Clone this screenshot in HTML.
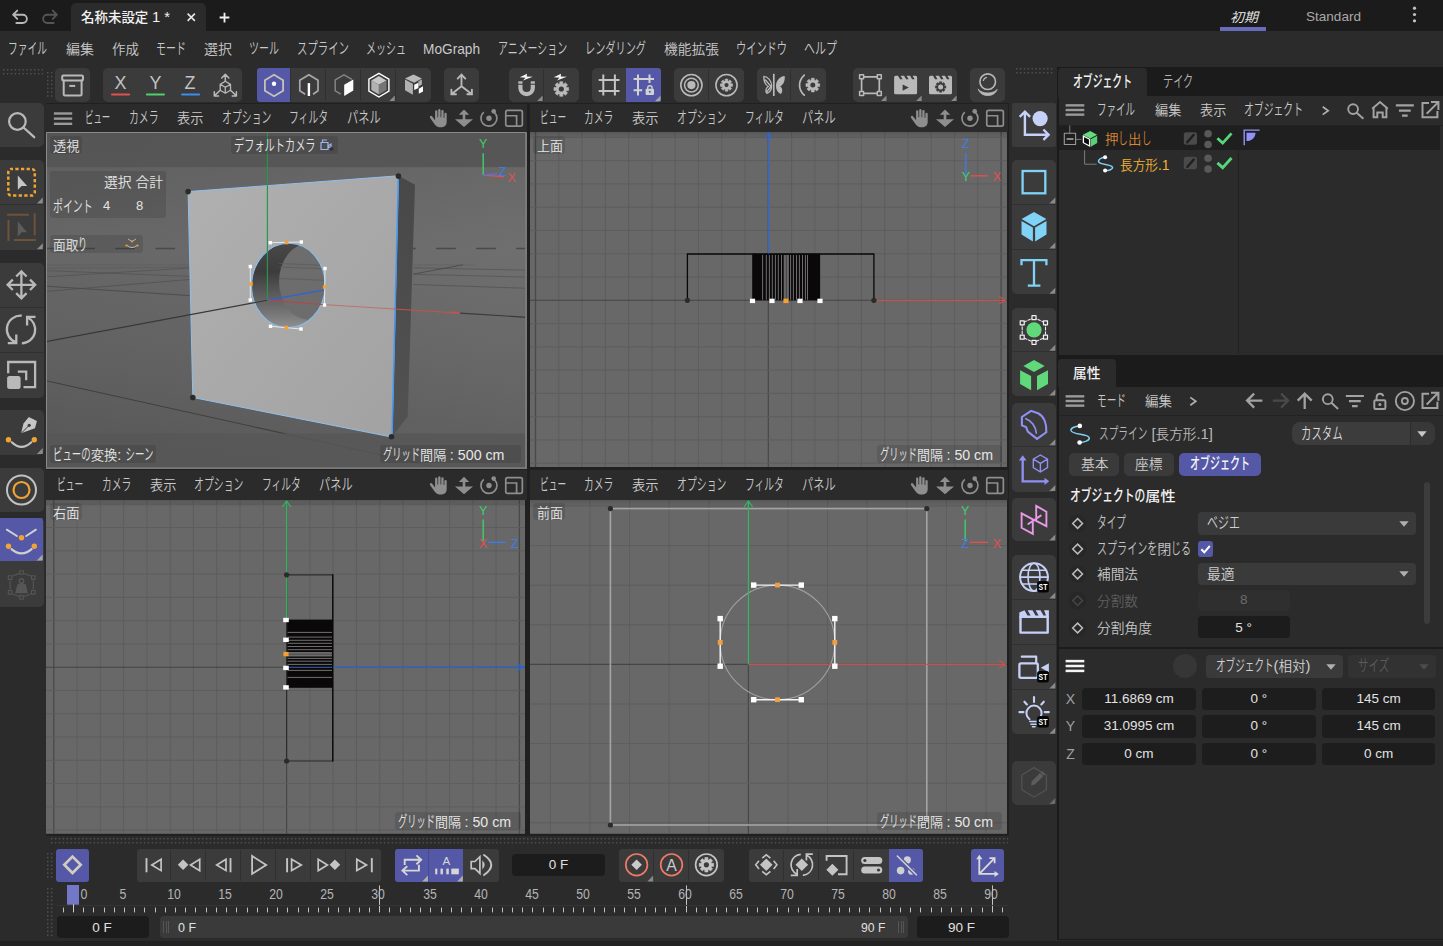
<!DOCTYPE html>
<html lang="ja"><head><meta charset="utf-8"><title>Cinema 4D</title><style>
html,body{margin:0;padding:0;background:#2b2b2b;}
body{width:1443px;height:946px;position:relative;overflow:hidden;font-family:"Liberation Sans","Noto Sans CJK JP",sans-serif;}
.a{position:absolute;display:block;}
.t{position:absolute;display:inline-block;white-space:nowrap;font-weight:350;}
.k{display:inline-block;transform-origin:0 65%;}
</style></head><body>
<div class="a" style="left:0px;top:0px;width:1443px;height:31px;background:#1b1b1b;"></div>
<div class="a" style="left:71px;top:3px;width:135px;height:28px;background:#2b2b2b;border-radius:5px 5px 0 0;"></div>
<svg class="a" style="left:8.80px;top:5.60px;color:#b8b8b8;" width="22" height="22" viewBox="0 0 24 24" fill="none" stroke="currentColor" stroke-width="1.6" stroke-linecap="round" stroke-linejoin="round"><path d="M9 5L4.5 9.5L9 14M4.5 9.5H15a4.5 4.5 0 0 1 0 9H8" stroke-width="2"/></svg>
<svg class="a" style="left:38.50px;top:5.60px;color:#555;" width="22" height="22" viewBox="0 0 24 24" fill="none" stroke="currentColor" stroke-width="1.6" stroke-linecap="round" stroke-linejoin="round"><path d="M15 5l4.5 4.5L15 14M19.5 9.5H9a4.5 4.5 0 0 0 0 9h7" stroke-width="2"/></svg>
<span class="t" id="t0" style="left:81px;top:7.20px;font-size:13.2px;line-height:20px;color:#f2f2f2;transform:scaleX(1.0206);transform-origin:0 50%;font-weight:500;">名称未設定 <span style="font-size:1.09em">1 *</span></span>
<svg class="a" style="left:184.45px;top:9.95px;color:#e8e8e8;" width="14.5" height="14.5" viewBox="0 0 24 24" fill="none" stroke="currentColor" stroke-width="1.6" stroke-linecap="round" stroke-linejoin="round"><path d="M6 6L18 18M18 6L6 18" stroke-width="2.6" stroke-linecap="butt"/></svg>
<svg class="a" style="left:218.00px;top:10.50px;color:#f0f0f0;" width="13" height="13" viewBox="0 0 24 24" fill="none" stroke="currentColor" stroke-width="1.6" stroke-linecap="round" stroke-linejoin="round"><path d="M12 3V21M3 12H21" stroke-width="3.4" stroke-linecap="butt"/></svg>
<span class="t" id="t1" style="left:1230px;top:7.90px;font-size:13.2px;line-height:20px;color:#f0f0f0;transform:scaleX(1.0616);transform-origin:0 50%;font-style:italic;">初期</span>
<div class="a" style="left:1219.9px;top:26.9px;width:46.2px;height:4.1px;background:#676cba;"></div>
<span class="t" id="t2" style="left:1306px;top:7.00px;font-size:13.5px;line-height:20px;color:#a8a8a8;transform:scaleX(1.0037);transform-origin:0 50%;">Standard</span>
<svg class="a" style="left:1404.50px;top:5.00px;color:#c4c4c4;" width="19" height="19" viewBox="0 0 24 24" fill="none" stroke="currentColor" stroke-width="1.6" stroke-linecap="round" stroke-linejoin="round"><g fill="currentColor" stroke="none"><circle cx="12" cy="4" r="2"/><circle cx="12" cy="12" r="2"/><circle cx="12" cy="20" r="2"/></g></svg>
<span class="t" id="t3" style="left:8px;top:39.90px;font-size:13.2px;line-height:20px;color:#c9c9c9;transform:scaleX(1.0413);transform-origin:0 50%;"><span class="k" style="margin-right:-15.31px;transform:scale(0.71,1.2)">ファイル</span></span>
<span class="t" id="t4" style="left:66px;top:39.90px;font-size:13.2px;line-height:20px;color:#c9c9c9;transform:scaleX(1.0616);transform-origin:0 50%;">編集</span>
<span class="t" id="t5" style="left:112px;top:39.90px;font-size:13.2px;line-height:20px;color:#c9c9c9;transform:scaleX(1.0237);transform-origin:0 50%;">作成</span>
<span class="t" id="t6" style="left:156px;top:39.90px;font-size:13.2px;line-height:20px;color:#c9c9c9;transform:scaleX(1.0679);transform-origin:0 50%;"><span class="k" style="margin-right:-11.48px;transform:scale(0.71,1.2)">モード</span></span>
<span class="t" id="t7" style="left:204px;top:39.90px;font-size:13.2px;line-height:20px;color:#c9c9c9;transform:scaleX(1.0616);transform-origin:0 50%;">選択</span>
<span class="t" id="t8" style="left:249px;top:39.90px;font-size:13.2px;line-height:20px;color:#c9c9c9;transform:scaleX(1.0679);transform-origin:0 50%;"><span class="k" style="margin-right:-11.48px;transform:scale(0.71,1.2)">ツール</span></span>
<span class="t" id="t9" style="left:297px;top:39.90px;font-size:13.2px;line-height:20px;color:#c9c9c9;transform:scaleX(1.1108);transform-origin:0 50%;"><span class="k" style="margin-right:-19.14px;transform:scale(0.71,1.2)">スプライン</span></span>
<span class="t" id="t10" style="left:366px;top:39.90px;font-size:13.2px;line-height:20px;color:#c9c9c9;transform:scaleX(1.0680);transform-origin:0 50%;"><span class="k" style="margin-right:-15.31px;transform:scale(0.71,1.2)">メッシュ</span></span>
<span class="t" id="t11" style="left:423px;top:39.00px;font-size:14.5px;line-height:20px;color:#c9c9c9;transform:scaleX(0.9429);transform-origin:0 50%;">MoGraph</span>
<span class="t" id="t12" style="left:498px;top:39.90px;font-size:13.2px;line-height:20px;color:#c9c9c9;transform:scaleX(1.0615);transform-origin:0 50%;"><span class="k" style="margin-right:-26.80px;transform:scale(0.71,1.2)">アニメーション</span></span>
<span class="t" id="t13" style="left:585px;top:39.90px;font-size:13.2px;line-height:20px;color:#c9c9c9;transform:scaleX(1.0863);transform-origin:0 50%;"><span class="k" style="margin-right:-22.97px;transform:scale(0.71,1.2)">レンダリング</span></span>
<span class="t" id="t14" style="left:664px;top:39.90px;font-size:13.2px;line-height:20px;color:#c9c9c9;transform:scaleX(1.0427);transform-origin:0 50%;">機能拡張</span>
<span class="t" id="t15" style="left:736px;top:39.90px;font-size:13.2px;line-height:20px;color:#c9c9c9;transform:scaleX(1.0895);transform-origin:0 50%;"><span class="k" style="margin-right:-19.14px;transform:scale(0.71,1.2)">ウインドウ</span></span>
<span class="t" id="t16" style="left:804px;top:39.90px;font-size:13.2px;line-height:20px;color:#c9c9c9;transform:scaleX(1.1746);transform-origin:0 50%;"><span class="k" style="margin-right:-11.48px;transform:scale(0.71,1.2)">ヘルプ</span></span>
<svg class="a" style="left:3px;top:69px" width="40" height="8.9" fill="#505050"><rect x="0.00" y="0.00" width="1.500" height="1.500"/><rect x="0.00" y="3.95" width="1.500" height="1.500"/><rect x="3.87" y="0.00" width="1.500" height="1.500"/><rect x="3.87" y="3.95" width="1.500" height="1.500"/><rect x="7.74" y="0.00" width="1.500" height="1.500"/><rect x="7.74" y="3.95" width="1.500" height="1.500"/><rect x="11.61" y="0.00" width="1.500" height="1.500"/><rect x="11.61" y="3.95" width="1.500" height="1.500"/><rect x="15.48" y="0.00" width="1.500" height="1.500"/><rect x="15.48" y="3.95" width="1.500" height="1.500"/><rect x="19.35" y="0.00" width="1.500" height="1.500"/><rect x="19.35" y="3.95" width="1.500" height="1.500"/><rect x="23.22" y="0.00" width="1.500" height="1.500"/><rect x="23.22" y="3.95" width="1.500" height="1.500"/><rect x="27.09" y="0.00" width="1.500" height="1.500"/><rect x="27.09" y="3.95" width="1.500" height="1.500"/><rect x="30.96" y="0.00" width="1.500" height="1.500"/><rect x="30.96" y="3.95" width="1.500" height="1.500"/><rect x="34.83" y="0.00" width="1.500" height="1.500"/><rect x="34.83" y="3.95" width="1.500" height="1.500"/><rect x="38.70" y="0.00" width="1.500" height="1.500"/><rect x="38.70" y="3.95" width="1.500" height="1.500"/></svg>
<svg class="a" style="left:47px;top:72px" width="6" height="27" fill="#505050"><rect x="0.00" y="0.00" width="1.500" height="1.500"/><rect x="0.00" y="3.87" width="1.500" height="1.500"/><rect x="0.00" y="7.74" width="1.500" height="1.500"/><rect x="0.00" y="11.61" width="1.500" height="1.500"/><rect x="0.00" y="15.48" width="1.500" height="1.500"/><rect x="0.00" y="19.35" width="1.500" height="1.500"/><rect x="0.00" y="23.22" width="1.500" height="1.500"/><rect x="3.95" y="0.00" width="1.500" height="1.500"/><rect x="3.95" y="3.87" width="1.500" height="1.500"/><rect x="3.95" y="7.74" width="1.500" height="1.500"/><rect x="3.95" y="11.61" width="1.500" height="1.500"/><rect x="3.95" y="15.48" width="1.500" height="1.500"/><rect x="3.95" y="19.35" width="1.500" height="1.500"/><rect x="3.95" y="23.22" width="1.500" height="1.500"/></svg>
<div class="a" style="left:55.3px;top:68.2px;width:34.6px;height:33.5px;background:#3b3b3b;border-radius:5px;"></div>
<div class="a" style="left:103.4px;top:68.2px;width:138.6px;height:33.5px;background:#3b3b3b;border-radius:5px;"></div>
<div class="a" style="left:257.2px;top:68.2px;width:173.7px;height:33.5px;background:#3b3b3b;border-radius:5px;"></div>
<div class="a" style="left:444.2px;top:68.2px;width:34.6px;height:33.5px;background:#3b3b3b;border-radius:5px;"></div>
<div class="a" style="left:509.3px;top:68.2px;width:69.6px;height:33.5px;background:#3b3b3b;border-radius:5px;"></div>
<div class="a" style="left:592px;top:68.2px;width:68.9px;height:33.5px;background:#3b3b3b;border-radius:5px;"></div>
<div class="a" style="left:674px;top:68.2px;width:69.8px;height:33.5px;background:#3b3b3b;border-radius:5px;"></div>
<div class="a" style="left:757.2px;top:68.2px;width:68.8px;height:33.5px;background:#3b3b3b;border-radius:5px;"></div>
<div class="a" style="left:853.2px;top:68.2px;width:104.0px;height:33.5px;background:#3b3b3b;border-radius:5px;"></div>
<div class="a" style="left:970.1px;top:68.2px;width:34.6px;height:33.5px;background:#3b3b3b;border-radius:5px;"></div>
<div class="a" style="left:257.2px;top:68.2px;width:33.1px;height:33.5px;background:#5558a6;border-radius:3px 0 0 3px;"></div>
<div class="a" style="left:625.8px;top:68.2px;width:35.1px;height:33.5px;background:#5558a6;border-radius:0 3px 3px 0;"></div>
<div class="a" style="left:290.0px;top:68.7px;width:1.0px;height:32.5px;background:#303030;"></div>
<div class="a" style="left:325.0px;top:68.7px;width:1.0px;height:32.5px;background:#303030;"></div>
<div class="a" style="left:360.0px;top:68.7px;width:1.0px;height:32.5px;background:#303030;"></div>
<div class="a" style="left:395.0px;top:68.7px;width:1.0px;height:32.5px;background:#303030;"></div>
<div class="a" style="left:542.8px;top:68.7px;width:1.0px;height:32.5px;background:#303030;"></div>
<div class="a" style="left:707.8px;top:68.7px;width:1.0px;height:32.5px;background:#303030;"></div>
<div class="a" style="left:790.0px;top:68.7px;width:1.0px;height:32.5px;background:#303030;"></div>
<svg class="a" style="left:50px;top:64px" width="960" height="40" viewBox="50 64 960 40" fill="none" stroke-linecap="round" stroke-linejoin="round"><rect x="62.200" y="75.500" width="20.800" height="5" rx="1.200" stroke="#b9b9b9" stroke-width="2"/><path d="M63.700 80.500V94.300Q63.700 95.600 65 95.600H80.300Q81.600 95.600 81.600 94.300V80.500" stroke="#b9b9b9" stroke-width="2"/><path d="M69.300 85.900H75.200" stroke="#b9b9b9" stroke-width="2" stroke-linecap="butt"/><rect x="111.00" y="93.400" width="19.100" height="2" rx="1" fill="#e2534f"/><rect x="145.90" y="93.400" width="19.100" height="2" rx="1" fill="#50d06a"/><rect x="181.00" y="93.400" width="19.100" height="2" rx="1" fill="#3d8ee8"/><path d="M225.300 81.300V74.800M221.700 78L225.300 74.400L228.900 78" stroke="#b9b9b9" stroke-width="1.500"/><path d="M225.300 81.300L230.500 84.400V90.300L225.300 93.200L220.200 90.300V84.400ZM220.200 84.400L225.300 87.200L230.500 84.400M225.300 87.200V93.200" stroke="#b9b9b9" stroke-width="1.300" stroke-linejoin="round"/><path d="M220.200 90.300L214.500 95.600M214.300 91.700V95.900H218.500M230.500 90.300L236.200 95.600M236.400 91.700V95.900H232.200" stroke="#b9b9b9" stroke-width="1.500"/><path d="M274.0 74.8L283.1 80.2L283.1 90.8L274.0 96.2L264.9 90.8L264.9 80.2Z" stroke="#c6c2b8" stroke-width="1.800" stroke-linejoin="miter"/><circle cx="274" cy="83.800" r="2.200" fill="#fff"/><path d="M305.200 94.200L299.8 90.8L299.8 80.2L308.9 74.8L318.0 80.2L318.0 90.8L313.100 94.200" stroke="#a8a8a8" stroke-width="1.700" stroke-linejoin="miter" stroke-linecap="butt"/><path d="M308.900 83.100V96" stroke="#fff" stroke-width="2.400" stroke-linecap="butt"/><path d="M340.800 94.200L335.200 90.800V79.900L344 74.800L351.900 79.300" stroke="#848484" stroke-width="1.500" stroke-linejoin="miter" stroke-linecap="butt"/><path d="M344.200 84.800L353.300 79.500V90.400L344.200 95.900Z" fill="#fff"/><path d="M378.900 73.400L388.900 79.200V91L378.900 97L368.900 91V79.200Z" stroke="#fff" stroke-width="1.400" stroke-linejoin="miter"/><path d="M378.900 75.900L386.500 80.400L378.900 84.800L371.300 80.400Z" fill="#c6c6c6"/><path d="M371.300 80.400L378.900 84.800V94.500L371.300 90Z" fill="#b2b2b2"/><path d="M386.500 80.400L378.900 84.800V94.500L386.500 90Z" fill="#767676"/><path d="M394.8 95.6V101.1H389.3Z" fill="#8a8a8a" stroke="none"/><path d="M413.500 74.400L421.900 78.600L414.200 82.700L405 78.600Z" fill="#b9b9b9"/><path d="M405 79.500L412.900 83.700V94.800L405 90.300Z" fill="#b0b0b0"/><path d="M418.400 81.300L421.900 79.500V84.500L418.400 86.400Z" fill="#b0b0b0"/><path d="M414.200 84.800L418.400 82.700V87.900L414.200 90.100Z" fill="#fff"/><path d="M418.800 88.700L423 86.200V91.400L418.800 93.800Z" fill="#fff"/><path d="M461.500 86.200V75M457.700 78.600L461.500 74.600L465.300 78.600M461.500 86.200L451.700 94M451.400 89.600V94.200H456M461.500 86.200L471.600 94M471.900 89.600V94.200H467.300" stroke="#b9b9b9" stroke-width="1.900" stroke-linejoin="miter"/><path d="M518.300 84.700V88A8.300 8.300 0 0 0 534.900 88V84.700H530.700V88A4.100 4.100 0 0 1 522.500 88V84.700Z" fill="#b9b9b9"/><rect x="518.300" y="81.300" width="4.200" height="2.400" fill="#b9b9b9"/><rect x="530.700" y="81.300" width="4.200" height="2.400" fill="#b9b9b9"/><path d="M527.0 73.8L519.8 77.2L525.4 77.7L523.0 80.39999999999999L532.8 76.8L526.8 76.5Z" fill="#f4f4f4"/><path d="M542.6 95.6V101.1H537.1Z" fill="#8a8a8a" stroke="none"/><path d="M561.0 73.8L553.8 77.2L559.4 77.7L557.0 80.39999999999999L566.8 76.8L560.8 76.5Z" fill="#f4f4f4"/><path d="M559.69 83.84L559.76 81.66L562.84 81.66L562.91 83.84L563.81 84.22L565.40 82.72L567.58 84.90L566.08 86.49L566.46 87.39L568.64 87.46L568.64 90.54L566.46 90.61L566.08 91.51L567.58 93.10L565.40 95.28L563.81 93.78L562.91 94.16L562.84 96.34L559.76 96.34L559.69 94.16L558.79 93.78L557.20 95.28L555.02 93.10L556.52 91.51L556.14 90.61L553.96 90.54L553.96 87.46L556.14 87.39L556.52 86.49L555.02 84.90L557.20 82.72L558.79 84.22Z" fill="#b9b9b9" stroke="#b9b9b9" stroke-width=".6" stroke-linejoin="round"/><circle cx="561.3" cy="89" r="2.6" fill="#3b3b3b"/><path d="M603.300 74.400V95.600M614.900 74.400V95.600M598.700 79.900H619.500M598.700 91H619.500" stroke="#c4c4c4" stroke-width="2" stroke-linecap="butt"/><path d="M638 74.400V95.600M649.500 74.400V83M633.600 79H654M633.600 90.300H642.200" stroke="#d2d2d2" stroke-width="2" stroke-linecap="butt"/><rect x="645.600" y="88.700" width="8.400" height="6.200" rx="1" fill="#d2d2d2"/><path d="M647.700 88.700V88A2.200 2.200 0 0 1 652.100 88V88.700" stroke="#d2d2d2" stroke-width="1.400"/><circle cx="649.800" cy="91.800" r="1" fill="#5558a6"/><path d="M660.5 95.8V101.3H655.0Z" fill="#a6a6a6" stroke="none"/><circle cx="691.400" cy="85.100" r="10.600" stroke="#b9b9b9" stroke-width="1.600"/><circle cx="691.400" cy="85.100" r="6.900" stroke="#b9b9b9" stroke-width="1.500"/><circle cx="691.400" cy="85.100" r="4.100" fill="#b9b9b9"/><circle cx="726.500" cy="85.100" r="10.600" stroke="#b9b9b9" stroke-width="1.600"/><path d="M725.17 80.84L725.23 79.03L727.77 79.03L727.83 80.84L728.57 81.15L729.89 79.91L731.69 81.71L730.45 83.03L730.76 83.77L732.57 83.83L732.57 86.37L730.76 86.43L730.45 87.17L731.69 88.49L729.89 90.29L728.57 89.05L727.83 89.36L727.77 91.17L725.23 91.17L725.17 89.36L724.43 89.05L723.11 90.29L721.31 88.49L722.55 87.17L722.24 86.43L720.43 86.37L720.43 83.83L722.24 83.77L722.55 83.03L721.31 81.71L723.11 79.91L724.43 81.15Z" fill="#b9b9b9" stroke="#b9b9b9" stroke-width=".6" stroke-linejoin="round"/><circle cx="726.5" cy="85.1" r="2.1" fill="#3b3b3b"/><path d="M773.800 73.800V96" stroke="#b9b9b9" stroke-width="1.700" stroke-linecap="butt"/><path d="M771.600 85.800C771.600 81 768 76.500 763.900 76.300C763.500 80.500 765.300 85 768.500 86.500C766 87.500 765 91 766.900 93.300C769.700 92.500 771.600 90 771.600 85.800ZM765.500 80L771 86.500L767 91.500" stroke="#b9b9b9" stroke-width="1.300" stroke-linejoin="round"/><path d="M776 85.800C776 81 779.600 76.500 784.700 76C785.300 80.500 783.300 85 780.100 86.500C782.600 87.500 783.100 91.500 780.900 94C778 93 776 90 776 85.800Z" fill="#b9b9b9"/><path d="M804.300 75.100C798 81 798 89.300 804.300 95.200" stroke="#b9b9b9" stroke-width="1.700"/><path d="M811.30 80.29L811.36 78.25L814.24 78.25L814.30 80.29L815.14 80.64L816.63 79.24L818.66 81.27L817.26 82.76L817.61 83.60L819.65 83.66L819.65 86.54L817.61 86.60L817.26 87.44L818.66 88.93L816.63 90.96L815.14 89.56L814.30 89.91L814.24 91.95L811.36 91.95L811.30 89.91L810.46 89.56L808.97 90.96L806.94 88.93L808.34 87.44L807.99 86.60L805.95 86.54L805.95 83.66L807.99 83.60L808.34 82.76L806.94 81.27L808.97 79.24L810.46 80.64Z" fill="#b9b9b9" stroke="#b9b9b9" stroke-width=".6" stroke-linejoin="round"/><circle cx="812.8" cy="85.1" r="2.5" fill="#3b3b3b"/><path d="M861.600 76.800H879.300V93.400H861.600Z" stroke="#b9b9b9" stroke-width="1.700"/><rect x="859.6" y="74.8" width="4" height="4" fill="#3b3b3b" stroke="#b9b9b9" stroke-width="1.500"/><rect x="877.3" y="74.8" width="4" height="4" fill="#3b3b3b" stroke="#b9b9b9" stroke-width="1.500"/><rect x="859.6" y="91.4" width="4" height="4" fill="#3b3b3b" stroke="#b9b9b9" stroke-width="1.500"/><rect x="877.3" y="91.4" width="4" height="4" fill="#3b3b3b" stroke="#b9b9b9" stroke-width="1.500"/><path d="M886.5 95.6V101.1H881.0Z" fill="#8a8a8a" stroke="none"/><path d="M894.1 79.700V77.300Q894.1 75.800 895.6 75.800H898.1L900.1 79.300H902.6L900.6 75.800H904.1L906.1 79.300H908.6L906.6 75.800H910.1L912.1 79.300H914.6L912.6 75.800H915.6Q917.1 75.800 917.1 77.300V92.700Q917.1 94.200 915.6 94.200H895.6Q894.1 94.200 894.1 92.700Z" fill="#b9b9b9"/><path d="M902.600 84.400L908.800 87.500L902.600 90.700Z" fill="#3b3b3b"/><path d="M921.6 95.6V101.1H916.1Z" fill="#8a8a8a" stroke="none"/><path d="M929 79.700V77.300Q929 75.800 930.5 75.800H933L935 79.300H937.5L935.5 75.800H939L941 79.300H943.5L941.5 75.800H945L947 79.300H949.5L947.5 75.800H950.5Q952 75.800 952 77.300V92.700Q952 94.200 950.5 94.200H930.5Q929 94.200 929 92.700Z" fill="#b9b9b9"/><path d="M939.46 83.36L939.51 81.81L941.69 81.81L941.74 83.36L942.37 83.62L943.50 82.56L945.04 84.10L943.98 85.23L944.24 85.86L945.79 85.91L945.79 88.09L944.24 88.14L943.98 88.77L945.04 89.90L943.50 91.44L942.37 90.38L941.74 90.64L941.69 92.19L939.51 92.19L939.46 90.64L938.83 90.38L937.70 91.44L936.16 89.90L937.22 88.77L936.96 88.14L935.41 88.09L935.41 85.91L936.96 85.86L937.22 85.23L936.16 84.10L937.70 82.56L938.83 83.62Z" fill="#3b3b3b" stroke="#3b3b3b" stroke-width=".6" stroke-linejoin="round"/><circle cx="940.6" cy="87" r="2.5" fill="#b9b9b9"/><path d="M956.6 95.6V101.1H951.1Z" fill="#8a8a8a" stroke="none"/><circle cx="987.700" cy="81.700" r="7.800" stroke="#b9b9b9" stroke-width="1.600"/><path d="M983.300 80.500A4.500 4.500 0 0 1 986.500 77.300" stroke="#b9b9b9" stroke-width="1.200"/><path d="M978.300 89.300C980.500 97.700 994.900 97.700 997.100 89.300C994 94.300 981.400 94.300 978.300 89.300Z" fill="#b9b9b9" stroke="#b9b9b9" stroke-width=".8"/></svg>
<span class="t" id="t17" style="left:120.55px;top:72.60px;font-size:17.9px;line-height:20px;color:#c2c2c2;transform:translateX(-50%) scaleX(1.0000);transform-origin:50% 50%;">X</span>
<span class="t" id="t18" style="left:155.45px;top:72.60px;font-size:17.9px;line-height:20px;color:#c2c2c2;transform:translateX(-50%) scaleX(1.0000);transform-origin:50% 50%;">Y</span>
<span class="t" id="t19" style="left:190px;top:72.60px;font-size:17.9px;line-height:20px;color:#c2c2c2;transform:translateX(-50%) scaleX(1.0000);transform-origin:50% 50%;">Z</span>
<svg class="a" style="left:1016px;top:68px" width="37" height="8.9" fill="#505050"><rect x="0.00" y="0.00" width="1.500" height="1.500"/><rect x="0.00" y="3.95" width="1.500" height="1.500"/><rect x="3.87" y="0.00" width="1.500" height="1.500"/><rect x="3.87" y="3.95" width="1.500" height="1.500"/><rect x="7.74" y="0.00" width="1.500" height="1.500"/><rect x="7.74" y="3.95" width="1.500" height="1.500"/><rect x="11.61" y="0.00" width="1.500" height="1.500"/><rect x="11.61" y="3.95" width="1.500" height="1.500"/><rect x="15.48" y="0.00" width="1.500" height="1.500"/><rect x="15.48" y="3.95" width="1.500" height="1.500"/><rect x="19.35" y="0.00" width="1.500" height="1.500"/><rect x="19.35" y="3.95" width="1.500" height="1.500"/><rect x="23.22" y="0.00" width="1.500" height="1.500"/><rect x="23.22" y="3.95" width="1.500" height="1.500"/><rect x="27.09" y="0.00" width="1.500" height="1.500"/><rect x="27.09" y="3.95" width="1.500" height="1.500"/><rect x="30.96" y="0.00" width="1.500" height="1.500"/><rect x="30.96" y="3.95" width="1.500" height="1.500"/><rect x="34.83" y="0.00" width="1.500" height="1.500"/><rect x="34.83" y="3.95" width="1.500" height="1.500"/></svg>
<div class="a" style="left:0px;top:103px;width:44px;height:43.7px;background:#3b3b3b;border-radius:0 5px 5px 0;"></div>
<div class="a" style="left:0px;top:160px;width:44px;height:90px;background:#3b3b3b;border-radius:0 5px 5px 0;"></div>
<div class="a" style="left:0px;top:204.3px;width:44px;height:1.0px;background:#303030;"></div>
<div class="a" style="left:0px;top:263px;width:44px;height:134.5px;background:#3b3b3b;border-radius:0 5px 5px 0;"></div>
<div class="a" style="left:0px;top:307.2px;width:44px;height:1.0px;background:#303030;"></div>
<div class="a" style="left:0px;top:352px;width:44px;height:1px;background:#303030;"></div>
<div class="a" style="left:0px;top:410.1px;width:44px;height:44.6px;background:#3b3b3b;border-radius:0 5px 5px 0;"></div>
<div class="a" style="left:0px;top:468px;width:44px;height:43.7px;background:#3b3b3b;border-radius:0 5px 5px 0;"></div>
<div class="a" style="left:0px;top:518.4px;width:44px;height:88.3px;background:#3b3b3b;border-radius:0 5px 5px 0;"></div>
<div class="a" style="left:0px;top:518.4px;width:42.8px;height:42.6px;background:#5558a6;border-radius:0 2px 2px 0;"></div>
<svg class="a" style="left:0px;top:100px" width="46" height="510" viewBox="0 100 46 510" fill="none" stroke-linecap="round" stroke-linejoin="round"><circle cx="17.4" cy="121.5" r="8.3" stroke="#b9b9b9" stroke-width="2.2"/><path d="M23.5 127.5L34.2 137.2" stroke="#b9b9b9" stroke-width="2.3"/><rect x="8.3" y="168.9" width="26.5" height="26.700" rx="3" stroke="#f2a432" stroke-width="2.500" stroke-dasharray="3.300 2.320" stroke-dashoffset="1.600" stroke-linecap="butt"/><path d="M17.800 175.400V189.800L21.700 185.900H27.200Z" fill="#c6c6c6"/><path d="M42.8 197.6V203.6H36.8Z" fill="#8a8a8a" stroke="none"/><path d="M7.100 214.700H28.800M34.700 213.300V235.300M13.900 240H36M8.500 220V241" stroke="#6e5339" stroke-width="2" stroke-linecap="butt"/><path d="M17.800 221.300V236.700L21.700 232.300H27Z" fill="#5c5c5c"/><path d="M42.8 243.2V249.2H36.8Z" fill="#8a8a8a" stroke="none"/><path d="M21.400 271.300V298.300M7.600 284.800H35.200M16.200 276.500L21.400 271.300L26.600 276.500M16.200 293.100L21.400 298.300L26.600 293.100M12.800 279.600L7.600 284.800L12.800 290M30 279.600L35.200 284.800L30 290" stroke="#b9b9b9" stroke-width="2.300" stroke-linecap="butt" stroke-linejoin="miter"/><path d="M21.800 315.700A13.700 13.700 0 0 0 16.100 342.300M7.800 343.200H16.300V334.600" stroke="#b9b9b9" stroke-width="2.300" stroke-linecap="butt" stroke-linejoin="miter"/><path d="M21.800 343.300A13.700 13.700 0 0 0 27.300 317.200M35.500 316.900H27.100V325.400" stroke="#b9b9b9" stroke-width="2.300" stroke-linecap="butt" stroke-linejoin="miter"/><path d="M8.200 373.300V362H35.100V387.200H23.500M17.800 371.700H26.200V380.300" stroke="#b9b9b9" stroke-width="2.300" stroke-linecap="butt" stroke-linejoin="miter"/><rect x="7.100" y="376" width="13.500" height="13" rx="2.500" fill="#b9b9b9"/><path d="M11.800 442.300Q21.400 451.600 31.300 442.300" stroke="#c2c2c2" stroke-width="2.200"/><circle cx="8.500" cy="439.700" r="2.700" fill="#f2a432"/><circle cx="34.300" cy="439.700" r="2.700" fill="#f2a432"/><path d="M28.800 416.900L36.900 421.100L35 428.200L21.100 433.200L23.500 423.500Z" fill="#c6c6c6"/><circle cx="29.200" cy="425.300" r="1.600" fill="#3b3b3b"/><path d="M29.200 425.300L21.500 433" stroke="#3b3b3b" stroke-width="1"/><path d="M42.8 448V454H36.8Z" fill="#8a8a8a" stroke="none"/><circle cx="21.500" cy="490" r="14.500" stroke="#c2c2c2" stroke-width="2"/><circle cx="21.500" cy="490" r="8" stroke="#f2a432" stroke-width="2.200"/><path d="M6.800 529.700L16.900 536M26.200 536L35.900 529.700" stroke="#cfcfcf" stroke-width="2"/><path d="M11.500 549.200Q21.500 557.700 31.600 549.200" stroke="#cfcfcf" stroke-width="2.200"/><circle cx="21.5" cy="537.7" r="2.700" fill="#f2a432"/><circle cx="8.5" cy="546.3" r="2.700" fill="#f2a432"/><circle cx="34.3" cy="546.3" r="2.700" fill="#f2a432"/><path d="M42.6 554.6V560.6H36.6Z" fill="#a8a8a8" stroke="none"/><path d="M12.500 576L19 573.400M24 573.400L30.800 576M10.100 580.500V589.500M33.300 580.500V589.500M12.500 594L19 596.500M24 596.500L30.800 594" stroke="#565656" stroke-width="1.100" stroke-linecap="butt"/><rect x="19.7" y="570.7" width="3.600" height="3.600" stroke="#565656" stroke-width="1.100" fill="#3b3b3b"/><rect x="8.3" y="575.8" width="3.600" height="3.600" stroke="#565656" stroke-width="1.100" fill="#3b3b3b"/><rect x="31.5" y="575.8" width="3.600" height="3.600" stroke="#565656" stroke-width="1.100" fill="#3b3b3b"/><rect x="8.3" y="590.5" width="3.600" height="3.600" stroke="#565656" stroke-width="1.100" fill="#3b3b3b"/><rect x="31.5" y="590.5" width="3.600" height="3.600" stroke="#565656" stroke-width="1.100" fill="#3b3b3b"/><rect x="19.7" y="595.6" width="3.600" height="3.600" stroke="#565656" stroke-width="1.100" fill="#3b3b3b"/><path d="M15.200 593.200L17.300 584.500Q21.500 581.500 25.800 584.500L27.900 593.200Z" fill="#565656"/><circle cx="21.500" cy="581" r="2.200" stroke="#565656" stroke-width="1.400"/></svg>
<div class="a" style="left:1012px;top:103px;width:44px;height:43.6px;background:#3b3b3b;border-radius:2px;"></div>
<div class="a" style="left:1012px;top:160px;width:44px;height:134.4px;background:#3b3b3b;border-radius:5px;"></div>
<div class="a" style="left:1012px;top:203.9px;width:44px;height:1.0px;background:#303030;"></div>
<div class="a" style="left:1012px;top:248.7px;width:44px;height:1.0px;background:#303030;"></div>
<div class="a" style="left:1012px;top:307.9px;width:44px;height:88.5px;background:#3b3b3b;border-radius:5px;"></div>
<div class="a" style="left:1012px;top:351.1px;width:44px;height:1.0px;background:#303030;"></div>
<div class="a" style="left:1012px;top:402.6px;width:44px;height:89.2px;background:#3b3b3b;border-radius:5px;"></div>
<div class="a" style="left:1012px;top:445.6px;width:44px;height:1.0px;background:#303030;"></div>
<div class="a" style="left:1012px;top:498.2px;width:44px;height:43.2px;background:#3b3b3b;border-radius:5px;"></div>
<div class="a" style="left:1012px;top:555.1px;width:44px;height:179.4px;background:#3b3b3b;border-radius:5px;"></div>
<div class="a" style="left:1012px;top:599.0px;width:44px;height:1.0px;background:#303030;"></div>
<div class="a" style="left:1012px;top:644.3px;width:44px;height:1.0px;background:#303030;"></div>
<div class="a" style="left:1012px;top:688.8px;width:44px;height:1.0px;background:#303030;"></div>
<div class="a" style="left:1012px;top:760.9px;width:44px;height:43.9px;background:#3b3b3b;border-radius:5px;"></div>
<svg class="a" style="left:1010px;top:100px" width="48" height="710" viewBox="1010 100 48 710" fill="none" stroke-linecap="round" stroke-linejoin="round"><path d="M1024.900 112V134.700H1048.300M1019.700 116.900L1024.900 111.700L1030.100 116.900M1043.400 129.500L1048.600 134.700L1043.400 139.900" stroke="#c7d0f7" stroke-width="2.400" stroke-linecap="butt" stroke-linejoin="miter"/><circle cx="1040.100" cy="118.600" r="7.600" fill="#c7d0f7"/><rect x="1022.600" y="171" width="22.700" height="22.300" stroke="#80d3f7" stroke-width="2.300" stroke-linejoin="miter"/><path d="M1055.3 197.5V203.5H1049.3Z" fill="#8a8a8a" stroke="none"/><path d="M1034 212L1046.400 219.100L1034 226.200L1021.600 219.100Z" fill="#80d3f7"/><path d="M1021.500 221L1032.900 227.400V241.400L1021.500 234.600Z" fill="#80d3f7"/><path d="M1046.500 221L1035.100 227.400V241.400L1046.500 234.600Z" fill="#80d3f7"/><path d="M1055.3 242.5V248.5H1049.3Z" fill="#8a8a8a" stroke="none"/><path d="M1021.500 265.200V260.200H1046.400V265.200M1034 260.200V285.600M1027.800 285.600H1040.400" stroke="#80d3f7" stroke-width="2.300" stroke-linecap="butt" stroke-linejoin="miter"/><path d="M1055.3 287.7V293.7H1049.3Z" fill="#8a8a8a" stroke="none"/><path d="M1034 317.700L1045.500 322.800V337.200L1034 342.300L1022.200 337.200V322.800Z" stroke="#ededed" stroke-width="1.100" stroke-dasharray="2.600 1.700"/><circle cx="1034" cy="329.800" r="7.600" fill="#60d97b"/><rect x="1032.0" y="315.7" width="4" height="4" fill="#3b3b3b" stroke="#f2f2f2" stroke-width="1.200"/><rect x="1032.0" y="340.3" width="4" height="4" fill="#3b3b3b" stroke="#f2f2f2" stroke-width="1.200"/><rect x="1020.2" y="320.8" width="4" height="4" fill="#3b3b3b" stroke="#f2f2f2" stroke-width="1.200"/><rect x="1043.5" y="320.8" width="4" height="4" fill="#3b3b3b" stroke="#f2f2f2" stroke-width="1.200"/><rect x="1020.2" y="335.2" width="4" height="4" fill="#3b3b3b" stroke="#f2f2f2" stroke-width="1.200"/><rect x="1043.5" y="335.2" width="4" height="4" fill="#3b3b3b" stroke="#f2f2f2" stroke-width="1.200"/><path d="M1055.3 344.7V350.7H1049.3Z" fill="#8a8a8a" stroke="none"/><path d="M1034 360L1044.700 366L1034 372L1023.400 366Z" fill="#60d97b"/><path d="M1020.100 370.200L1031.100 376.100V390.200L1020.100 384Z" fill="#60d97b"/><path d="M1048 370.200L1037 376.100V390.200L1048 384Z" fill="#60d97b"/><path d="M1055.3 389.6V395.6H1049.3Z" fill="#8a8a8a" stroke="none"/><path d="M1031.100 410.800L1021.900 417V425.400L1026.100 427.100L1027.800 431.600L1037 438.900L1046.300 432.300C1046.800 424 1044 416.500 1038.600 413.500Z" stroke="#9090f5" stroke-width="2.100" stroke-linejoin="miter"/><path d="M1025.800 418.700C1031.500 420.500 1035.500 426.500 1036.300 433" stroke="#9090f5" stroke-width="1.700"/><path d="M1055.3 439.3V445.3H1049.3Z" fill="#8a8a8a" stroke="none"/><path d="M1022.700 459V481.300H1045.500" stroke="#9090f5" stroke-width="2.300" stroke-linecap="butt" stroke-linejoin="miter"/><path d="M1018.900 460.500L1022.700 455.300L1026.500 460.500ZM1044.500 477.700L1049.200 481.300L1044.500 484.900Z" fill="#9090f5"/><path d="M1040.400 455L1047.500 459.200V467.700L1040.400 472L1033.300 467.700V459.200ZM1033.300 459.200L1040.400 463.400L1047.500 459.200M1040.400 463.400V472" stroke="#9090f5" stroke-width="1.400" stroke-linejoin="miter"/><path d="M1055.3 485V491H1049.3Z" fill="#8a8a8a" stroke="none"/><path d="M1021.600 513.400L1032.800 519.400V533.800L1021.600 527.800ZM1036.200 505.900L1046.400 511.700V526.100L1036.200 520.900ZM1028.300 524L1040.700 515.600M1032.800 519.400L1036.200 520.900" stroke="#e898e6" stroke-width="1.900" stroke-linejoin="miter"/><path d="M1055.3 534.6V540.6H1049.3Z" fill="#8a8a8a" stroke="none"/><circle cx="1034" cy="577.100" r="13.900" stroke="#c7d0f7" stroke-width="2"/><ellipse cx="1034" cy="577.100" rx="6" ry="13.900" stroke="#c7d0f7" stroke-width="1.600"/><path d="M1020.100 577.100H1048M1022 570.300H1046M1022 584H1046" stroke="#c7d0f7" stroke-width="1.600"/><rect x="1037.1" y="580.9" width="11.800" height="11.500" rx="2.500" fill="#050505"/><text x="1043.0" y="589.8" font-family="Liberation Sans,sans-serif" font-size="8.500" font-weight="700" text-anchor="middle" fill="#fff" textLength="8.800" lengthAdjust="spacingAndGlyphs">ST</text><path d="M1055.3 592.6V598.6H1049.3Z" fill="#8a8a8a" stroke="none"/><path d="M1020.500 617V632.600H1047.700V617" stroke="#c7d0f7" stroke-width="2.400" stroke-linejoin="round"/><path d="M1019.300 618V612.500L1024.500 610.200L1027.500 615.500H1030.600L1027.600 610.200H1032.500L1035.500 615.500H1038.600L1035.600 610.200H1040.500L1043.500 615.500H1046L1044 610.200H1048.900V618Z" fill="#c7d0f7"/><path d="M1021.800 656.700H1036.200V663" stroke="#c7d0f7" stroke-width="2.200" stroke-linejoin="round"/><rect x="1019.400" y="663.400" width="18.400" height="14.400" rx="1.500" stroke="#c7d0f7" stroke-width="2.300"/><path d="M1040.800 667.700L1048.900 663.200V672.300Z" fill="#c7d0f7"/><rect x="1037.1" y="671" width="11.800" height="11.500" rx="2.500" fill="#050505"/><text x="1043.0" y="679.9" font-family="Liberation Sans,sans-serif" font-size="8.500" font-weight="700" text-anchor="middle" fill="#fff" textLength="8.800" lengthAdjust="spacingAndGlyphs">ST</text><path d="M1055.3 682.5V688.5H1049.3Z" fill="#8a8a8a" stroke="none"/><path d="M1029.500 719.300A7.600 7.600 0 1 1 1038.500 719.300" stroke="#c7d0f7" stroke-width="2"/><path d="M1034 697V702M1024.400 701.700L1026.900 704.500M1043.800 701.700L1041.300 704.500M1019.400 712.100H1023.500M1044.700 712.100H1048.900" stroke="#c7d0f7" stroke-width="2.100"/><path d="M1029.800 721.400H1036M1031 724.300H1036M1032.500 726.700H1035" stroke="#c7d0f7" stroke-width="1.500"/><rect x="1037.1" y="715.9" width="11.800" height="11.500" rx="2.500" fill="#050505"/><text x="1043.0" y="724.8" font-family="Liberation Sans,sans-serif" font-size="8.500" font-weight="700" text-anchor="middle" fill="#fff" textLength="8.800" lengthAdjust="spacingAndGlyphs">ST</text><path d="M1055.3 727.7V733.7H1049.3Z" fill="#8a8a8a" stroke="none"/><path d="M1034 767.600L1046.400 775V789.700L1034 797L1021.800 789.700V775Z" stroke="#525252" stroke-width="1.300"/><path d="M1031 785.400L1031.800 781.200L1042 771L1045.200 774.200L1035 784.400Z" fill="#5c5c5c"/><path d="M1040.300 772.700L1043.500 775.900" stroke="#3b3b3b" stroke-width="1"/><path d="M1055.3 798V804H1049.3Z" fill="#6a6a6a" stroke="none"/></svg>
<div class="a" style="left:45.5px;top:102.5px;width:963.0px;height:733.5px;background:#202020;"></div>
<div class="a" style="left:46px;top:104px;width:481px;height:27.5px;background:#2b2b2b;"></div>
<svg class="a" style="left:52px;top:104px" width="24" height="27.5" viewBox="52 104 24 27.5"><rect x="53.900" y="112.30" width="18.300" height="2.400" fill="#9a9a9a"/><rect x="53.900" y="117.45" width="18.300" height="2.400" fill="#9a9a9a"/><rect x="53.900" y="122.60" width="18.300" height="2.400" fill="#9a9a9a"/></svg>
<span class="t" id="t20" style="left:84.7px;top:108.95px;font-size:13.2px;line-height:20px;color:#c9c9c9;transform:scaleX(0.9006);transform-origin:0 50%;"><span class="k" style="margin-right:-11.48px;transform:scale(0.71,1.2)">ビュー</span></span>
<span class="t" id="t21" style="left:129px;top:108.95px;font-size:13.2px;line-height:20px;color:#c9c9c9;transform:scaleX(1.0536);transform-origin:0 50%;"><span class="k" style="margin-right:-11.48px;transform:scale(0.71,1.2)">カメラ</span></span>
<span class="t" id="t22" style="left:177.3px;top:108.95px;font-size:13.2px;line-height:20px;color:#c9c9c9;transform:scaleX(1.0047);transform-origin:0 50%;">表示</span>
<span class="t" id="t23" style="left:221.6px;top:108.95px;font-size:13.2px;line-height:20px;color:#c9c9c9;transform:scaleX(1.0553);transform-origin:0 50%;"><span class="k" style="margin-right:-19.14px;transform:scale(0.71,1.2)">オプション</span></span>
<span class="t" id="t24" style="left:289.4px;top:108.95px;font-size:13.2px;line-height:20px;color:#c9c9c9;transform:scaleX(1.0483);transform-origin:0 50%;"><span class="k" style="margin-right:-15.31px;transform:scale(0.71,1.2)">フィルタ</span></span>
<span class="t" id="t25" style="left:346.7px;top:108.95px;font-size:13.2px;line-height:20px;color:#c9c9c9;transform:scaleX(1.1996);transform-origin:0 50%;"><span class="k" style="margin-right:-11.48px;transform:scale(0.71,1.2)">パネル</span></span>
<svg class="a" style="left:427px;top:104px" width="100" height="27.5" viewBox="427 104 100 27.5"><g transform="translate(438.40 118.25)"><path d="M-3.300 2V-6.800a1.150 1.150 0 0 1 2.300 0V-1h.8V-8a1.150 1.150 0 0 1 2.300 0V-1h.8V-7.200a1.150 1.150 0 0 1 2.300 0V-.5h.8V-4.300a1.150 1.150 0 0 1 2.300 0V3C8.600 7.500 5.500 9.100 2.500 9.100C-.5 9.100-2.500 8-4.500 5L-8.400-.5a1.300 1.300 0 0 1 2-1.600Z" fill="#8e8e8e"/></g><path d="M464 109.45L469.2 114.65H465.3V119.15H473L464 127.05L455 119.15H462.7V114.65H458.8Z" fill="#8e8e8e"/><path d="M483.80 112.05A8 8 0 1 0 494.40 112.35" stroke="#8e8e8e" stroke-width="1.700" fill="none"/><circle cx="493.70" cy="111.35" r="2.300" fill="#8e8e8e"/><circle cx="489" cy="118.25" r="2.700" fill="#8e8e8e"/><rect x="505.75" y="110.35" width="16.600" height="15.800" rx="1.800" stroke="#8e8e8e" stroke-width="1.700" fill="none"/><path d="M505.75 115.75H516.60V126.25" stroke="#8e8e8e" stroke-width="1.700" fill="none"/></svg>
<svg class="a" style="left:46px;top:131.5px;" width="481" height="337.3" viewBox="0 0 481 337.3"><defs><linearGradient id="sky" x1="0" y1="0" x2="0" y2="1"><stop offset="0" stop-color="#606060"/><stop offset="1" stop-color="#6a6a6a"/></linearGradient><linearGradient id="flr" x1="0" y1="0" x2="0" y2="1"><stop offset="0" stop-color="#6a6a6a"/><stop offset=".45" stop-color="#646464"/><stop offset="1" stop-color="#595959"/></linearGradient><linearGradient id="face" x1="0" y1="0" x2="1" y2="1"><stop offset="0" stop-color="#b0b0b0"/><stop offset="1" stop-color="#a2a2a2"/></linearGradient><linearGradient id="side" x1="0" y1="0" x2="0" y2="1"><stop offset="0" stop-color="#484848"/><stop offset="1" stop-color="#525252"/></linearGradient><linearGradient id="wall" x1="0" y1="0" x2="0" y2="1"><stop offset="0" stop-color="#4a4a4a"/><stop offset=".35" stop-color="#3c3c3c"/><stop offset=".75" stop-color="#707070"/><stop offset="1" stop-color="#9a9a9a"/></linearGradient><clipPath id="hole"><ellipse cx="242.39999999999998" cy="153.5" rx="36.8" ry="42.2" transform="rotate(2 242.39999999999998 153.5)"/></clipPath><linearGradient id="hl" x1="0" y1="0" x2="1" y2="0"><stop offset="0" stop-color="#000" stop-opacity=".03"/><stop offset="1" stop-color="#fff" stop-opacity=".035"/></linearGradient></defs><rect width="481" height="117.5" fill="url(#sky)"/><rect y="116.5" width="481" height="220.8" fill="url(#flr)"/><rect width="481" height="337.3" fill="url(#hl)"/><path d="M0.00 138.60L143.50 144.40" stroke="#4c4c4c" stroke-width="1" opacity="0.56"/><path d="M0.00 144.90L143.50 136.00" stroke="#4c4c4c" stroke-width="1" opacity="0.56"/><path d="M0.00 154.20L143.50 163.60" stroke="#4c4c4c" stroke-width="1" opacity="0.94"/><path d="M0.00 159.40L143.50 147.50" stroke="#4c4c4c" stroke-width="1" opacity="0.62"/><path d="M0.00 132.90L143.50 132.90" stroke="#4c4c4c" stroke-width="1" opacity="0.22"/><path d="M0.00 136.30L143.50 135.30" stroke="#4c4c4c" stroke-width="1" opacity="0.31"/><path d="M367.50 142.10L417.00 132.80" stroke="#4c4c4c" stroke-width="1" opacity="0.95"/><path d="M367.50 132.80L429.00 133.10" stroke="#4c4c4c" stroke-width="1" opacity="0.25"/><path d="M367.50 135.80L481.00 138.20" stroke="#4c4c4c" stroke-width="1" opacity="0.56"/><path d="M367.50 142.30L481.00 145.10" stroke="#4c4c4c" stroke-width="1" opacity="0.56"/><path d="M367.50 152.50L481.00 156.30" stroke="#4c4c4c" stroke-width="1" opacity="0.62"/><path d="M0.00 116.50H481" stroke="#4a4a4a" stroke-width="1.300" stroke-dasharray="19.800 20.300" stroke-dashoffset="11"/><path d="M0.00 248.80L396.00 336.50" stroke="#404040" stroke-width="1.100"/><path d="M414.00 181.10L481.00 185.30" stroke="#3a3a3a" stroke-width="1.2"/><rect width="481" height="35.099999999999994" fill="#545454" opacity=".88"/><rect y="301.5" width="481" height="35.80000000000001" fill="#575757" opacity=".85"/><path d="M352.40 43.80L369.00 52.70L361.70 284.50L346.00 305.10Z" fill="url(#side)"/><path d="M142.10 59.60L352.40 43.80L346.00 305.10L146.80 265.50Z" fill="url(#face)" stroke="#8fc0ee" stroke-width="1"/><path d="M352.40 43.80L346.00 305.10" stroke="#4596ee" stroke-width="1.500"/><g clip-path="url(#hole)"><rect x="199" y="106.5" width="90" height="95" fill="url(#wall)"/><ellipse cx="263.5" cy="149.5" rx="30.5" ry="38.5" fill="#6d6d6d"/><path d="M233.00 131.50L284.00 133.50" stroke="#5a5a5a" stroke-width="1" opacity=".7"/><path d="M233.00 135.00L284.00 137.00" stroke="#5a5a5a" stroke-width="1" opacity=".7"/><path d="M233.00 146.50L284.00 148.50" stroke="#5a5a5a" stroke-width="1" opacity=".7"/></g><ellipse cx="242.39999999999998" cy="153.5" rx="36.8" ry="42.2" fill="none" stroke="#86bdf0" stroke-width="1.1" transform="rotate(2 242.39999999999998 153.5)"/><path d="M0.00 209.70L221.40 168.20" stroke="#383838" stroke-width="1.150"/><path d="M221.40 0.00V168.2" stroke="#2a9650" stroke-width="1.150"/><path d="M221.40 168.20L279.00 157.90" stroke="#2c62d8" stroke-width="1.300"/><path d="M221.40 168.20L279.00 172.70" stroke="#b84444" stroke-width="1"/><path d="M279.00 172.70L348.00 177.00" stroke="#c9504c" stroke-width="1" opacity=".6"/><path d="M348.00 177.00L414.00 181.10" stroke="#c9504c" stroke-width="1"/><path d="M406.00 179.10L415.00 181.20L406.00 182.10Z" fill="#c9504c"/><path d="M224.30 110.70L255.30 110.00" stroke="#e8e8e8" stroke-width="1"/><path d="M204.30 134.50L204.30 168.00" stroke="#e8e8e8" stroke-width="1"/><path d="M279.00 136.50L278.50 173.00" stroke="#e8e8e8" stroke-width="1"/><path d="M224.50 194.30L255.00 197.00" stroke="#e8e8e8" stroke-width="1"/><rect x="222.60" y="109.00" width="3.4" height="3.4" fill="#fff"/><rect x="253.60" y="108.30" width="3.4" height="3.4" fill="#fff"/><rect x="202.60" y="132.80" width="3.4" height="3.4" fill="#fff"/><rect x="202.60" y="166.30" width="3.4" height="3.4" fill="#fff"/><rect x="277.30" y="134.80" width="3.4" height="3.4" fill="#fff"/><rect x="276.80" y="171.30" width="3.4" height="3.4" fill="#fff"/><rect x="222.80" y="192.60" width="3.4" height="3.4" fill="#fff"/><rect x="253.30" y="195.30" width="3.4" height="3.4" fill="#fff"/><rect x="238.80" y="108.70" width="3.6" height="3.6" fill="#f5a030"/><rect x="203.20" y="150.20" width="3.6" height="3.6" fill="#f5a030"/><rect x="276.90" y="153.20" width="3.6" height="3.6" fill="#f5a030"/><rect x="238.50" y="193.70" width="3.6" height="3.6" fill="#f5a030"/><circle cx="142.10" cy="59.60" r="2.8" fill="#2b2b2b"/><circle cx="352.40" cy="44.10" r="2.8" fill="#2b2b2b"/><circle cx="146.80" cy="265.50" r="2.8" fill="#2b2b2b"/><circle cx="345.50" cy="304.80" r="2.8" fill="#2b2b2b"/><path d="M437.20 21.30V43.099999999999994" stroke="#3fcf6a" stroke-width="1.4"/><path d="M437.20 43.10L458.00 44.70" stroke="#e05050" stroke-width="1.4"/><path d="M437.20 43.10L451.00 41.70" stroke="#3d7be8" stroke-width="1.4"/><path d="M.5 337.3V.5H481" stroke="#8a8a8a" stroke-width="1" fill="none"/><path d="M480 0V336.3H0" stroke="#7a7a7a" stroke-width="2" fill="none"/></svg>
<div class="a" style="left:50px;top:136.2px;width:31.6px;height:17.8px;background:rgba(0,0,0,0.115);border-radius:3px;"></div>
<span class="t" id="t26" style="left:53px;top:136.90px;font-size:13.2px;line-height:20px;color:#e6e6e6;transform:scaleX(1.0047);transform-origin:0 50%;">透視</span>
<div class="a" style="left:231.2px;top:136.2px;width:106.9px;height:17.8px;background:rgba(0,0,0,0.115);border-radius:3px;"></div>
<span class="t" id="t27" style="left:233.7px;top:136.90px;font-size:13.2px;line-height:20px;color:#e6e6e6;transform:scaleX(1.0883);transform-origin:0 50%;"><span class="k" style="margin-right:-30.62px;transform:scale(0.71,1.2)">デフォルトカメラ</span></span>
<svg class="a" style="left:320px;top:138px;" width="14" height="14" viewBox="0 0 14 14"><path d="M1 4.500H8V11.500H1ZM8 8L11 6V10.500Z" fill="none" stroke="#9fb4e8" stroke-width="1.200"/><path d="M2.500 4.500V2H7" fill="none" stroke="#9fb4e8" stroke-width="1.200"/><circle cx="11.500" cy="11" r="2" fill="#333"/></svg>
<div class="a" style="left:50px;top:171px;width:115.8px;height:46.5px;background:rgba(0,0,0,0.115);border-radius:3px;"></div>
<span class="t" id="t28" style="left:104px;top:173.10px;font-size:13.2px;line-height:20px;color:#e6e6e6;transform:scaleX(1.0457);transform-origin:0 50%;">選択 合計</span>
<span class="t" id="t29" style="left:52.5px;top:197.60px;font-size:13.2px;line-height:20px;color:#e6e6e6;transform:scaleX(1.0547);transform-origin:0 50%;"><span class="k" style="margin-right:-15.31px;transform:scale(0.71,1.2)">ポイント</span></span>
<span class="t" id="t30" style="left:106.5px;top:196.00px;font-size:13px;line-height:20px;color:#e4e4e4;transform:translateX(-50%) scaleX(1.0000);transform-origin:50% 50%;">4</span>
<span class="t" id="t31" style="left:139.5px;top:196.00px;font-size:13px;line-height:20px;color:#e4e4e4;transform:translateX(-50%) scaleX(1.0000);transform-origin:50% 50%;">8</span>
<div class="a" style="left:50px;top:234.7px;width:92.7px;height:18.0px;background:rgba(0,0,0,0.115);border-radius:3px;"></div>
<span class="t" id="t32" style="left:53px;top:235.50px;font-size:13.2px;line-height:20px;color:#e6e6e6;transform:scaleX(0.9655);transform-origin:0 50%;">面取<span class="k" style="margin-right:-3.83px;transform:scale(0.71,1.2)">り</span></span>
<svg class="a" style="left:123.5px;top:235.5px;" width="16" height="16" viewBox="0 0 16 16"><path d="M3 9.500Q8 13.500 13 9.500" stroke="#bbb" stroke-width="1" fill="none"/><path d="M4 3L8 5.500L12 3" stroke="#bbb" stroke-width=".9" fill="none"/><circle cx="8" cy="5.500" r="1.100" fill="#f5a030"/><circle cx="2.500" cy="9.500" r="1.100" fill="#f5a030"/><circle cx="13.500" cy="9.500" r="1.100" fill="#f5a030"/></svg>
<div class="a" style="left:50px;top:445px;width:105.7px;height:17.5px;background:rgba(0,0,0,0.115);border-radius:3px;"></div>
<span class="t" id="t33" style="left:53px;top:444.85px;font-size:13.2px;line-height:20px;color:#e6e6e6;transform:scaleX(1.0074);transform-origin:0 50%;"><span class="k" style="margin-right:-15.31px;transform:scale(0.71,1.2)">ビューの</span>変換<span style="font-size:1.09em">:</span><span style="font-size:1.09em"> </span><span class="k" style="margin-right:-11.48px;transform:scale(0.71,1.2)">シーン</span></span>
<div class="a" style="left:380px;top:445px;width:140.6px;height:17.5px;background:rgba(0,0,0,0.115);border-radius:3px;"></div>
<span class="t" id="t34" style="left:383px;top:444.85px;font-size:13.2px;line-height:20px;color:#e6e6e6;transform:scaleX(0.9907);transform-origin:0 50%;"><span class="k" style="margin-right:-15.31px;transform:scale(0.71,1.2)">グリッド</span>間隔 <span style="font-size:1.09em">: 500 cm</span></span>
<span class="t" id="t35" style="left:483.2px;top:133.50px;font-size:12.5px;line-height:20px;color:#3fcf6a;transform:translateX(-50%) scaleX(1.0000);transform-origin:50% 50%;">Y</span>
<span class="t" id="t36" style="left:502.7px;top:162.20px;font-size:12.5px;line-height:20px;color:#3d7be8;transform:translateX(-50%) scaleX(1.0000);transform-origin:50% 50%;">Z</span>
<span class="t" id="t37" style="left:511.7px;top:168.30px;font-size:12.5px;line-height:20px;color:#e05050;transform:translateX(-50%) scaleX(1.0000);transform-origin:50% 50%;">X</span>
<div class="a" style="left:530px;top:104px;width:477.5px;height:27.5px;background:#2b2b2b;"></div>
<span class="t" id="t38" style="left:539.5px;top:108.95px;font-size:13.2px;line-height:20px;color:#c9c9c9;transform:scaleX(0.9290);transform-origin:0 50%;"><span class="k" style="margin-right:-11.48px;transform:scale(0.71,1.2)">ビュー</span></span>
<span class="t" id="t39" style="left:584.4px;top:108.95px;font-size:13.2px;line-height:20px;color:#c9c9c9;transform:scaleX(1.0394);transform-origin:0 50%;"><span class="k" style="margin-right:-11.48px;transform:scale(0.71,1.2)">カメラ</span></span>
<span class="t" id="t40" style="left:632.3px;top:108.95px;font-size:13.2px;line-height:20px;color:#c9c9c9;transform:scaleX(1.0047);transform-origin:0 50%;">表示</span>
<span class="t" id="t41" style="left:677px;top:108.95px;font-size:13.2px;line-height:20px;color:#c9c9c9;transform:scaleX(1.0553);transform-origin:0 50%;"><span class="k" style="margin-right:-19.14px;transform:scale(0.71,1.2)">オプション</span></span>
<span class="t" id="t42" style="left:744.9px;top:108.95px;font-size:13.2px;line-height:20px;color:#c9c9c9;transform:scaleX(1.0402);transform-origin:0 50%;"><span class="k" style="margin-right:-15.31px;transform:scale(0.71,1.2)">フィルタ</span></span>
<span class="t" id="t43" style="left:802px;top:108.95px;font-size:13.2px;line-height:20px;color:#c9c9c9;transform:scaleX(1.1960);transform-origin:0 50%;"><span class="k" style="margin-right:-11.48px;transform:scale(0.71,1.2)">パネル</span></span>
<svg class="a" style="left:907.5px;top:104px" width="100" height="27.5" viewBox="907.5 104 100 27.5"><g transform="translate(918.90 118.25)"><path d="M-3.300 2V-6.800a1.150 1.150 0 0 1 2.300 0V-1h.8V-8a1.150 1.150 0 0 1 2.300 0V-1h.8V-7.200a1.150 1.150 0 0 1 2.300 0V-.5h.8V-4.300a1.150 1.150 0 0 1 2.300 0V3C8.600 7.500 5.500 9.100 2.500 9.100C-.5 9.100-2.500 8-4.500 5L-8.400-.5a1.300 1.300 0 0 1 2-1.600Z" fill="#8e8e8e"/></g><path d="M944.5 109.45L949.7 114.65H945.8V119.15H953.5L944.5 127.05L935.5 119.15H943.2V114.65H939.3Z" fill="#8e8e8e"/><path d="M964.30 112.05A8 8 0 1 0 974.90 112.35" stroke="#8e8e8e" stroke-width="1.700" fill="none"/><circle cx="974.20" cy="111.35" r="2.300" fill="#8e8e8e"/><circle cx="969.5" cy="118.25" r="2.700" fill="#8e8e8e"/><rect x="986.25" y="110.35" width="16.600" height="15.800" rx="1.800" stroke="#8e8e8e" stroke-width="1.700" fill="none"/><path d="M986.25 115.75H997.10V126.25" stroke="#8e8e8e" stroke-width="1.700" fill="none"/></svg>
<svg class="a" style="left:530px;top:131.5px;" width="477" height="335.7" viewBox="0 0 477 335.7"><defs><linearGradient id="gv530131" x1="0" y1="0" x2="0" y2="1"><stop offset="0" stop-color="#000" stop-opacity=".16"/><stop offset="1" stop-color="#000" stop-opacity="0"/></linearGradient></defs><rect width="477" height="335.7" fill="#686868"/><path d="M5.50 0V335.7" stroke="#4a4a4a" stroke-width="1.3"/><path d="M28.78 0V335.7" stroke="#5d5d5d" stroke-width="1"/><path d="M52.06 0V335.7" stroke="#5d5d5d" stroke-width="1"/><path d="M75.34 0V335.7" stroke="#5d5d5d" stroke-width="1"/><path d="M98.62 0V335.7" stroke="#5d5d5d" stroke-width="1"/><path d="M121.90 0V335.7" stroke="#5d5d5d" stroke-width="1"/><path d="M145.18 0V335.7" stroke="#5d5d5d" stroke-width="1"/><path d="M168.46 0V335.7" stroke="#5d5d5d" stroke-width="1"/><path d="M191.74 0V335.7" stroke="#5d5d5d" stroke-width="1"/><path d="M215.02 0V335.7" stroke="#5d5d5d" stroke-width="1"/><path d="M238.30 0V335.7" stroke="#454545" stroke-width="1.1"/><path d="M261.58 0V335.7" stroke="#5d5d5d" stroke-width="1"/><path d="M284.86 0V335.7" stroke="#5d5d5d" stroke-width="1"/><path d="M308.14 0V335.7" stroke="#5d5d5d" stroke-width="1"/><path d="M331.42 0V335.7" stroke="#5d5d5d" stroke-width="1"/><path d="M354.70 0V335.7" stroke="#5d5d5d" stroke-width="1"/><path d="M377.98 0V335.7" stroke="#5d5d5d" stroke-width="1"/><path d="M401.26 0V335.7" stroke="#5d5d5d" stroke-width="1"/><path d="M424.54 0V335.7" stroke="#5d5d5d" stroke-width="1"/><path d="M447.82 0V335.7" stroke="#5d5d5d" stroke-width="1"/><path d="M471.10 0V335.7" stroke="#4a4a4a" stroke-width="1.3"/><path d="M0 5.34H477" stroke="#5d5d5d" stroke-width="1"/><path d="M0 28.62H477" stroke="#5d5d5d" stroke-width="1"/><path d="M0 51.90H477" stroke="#5d5d5d" stroke-width="1"/><path d="M0 75.18H477" stroke="#5d5d5d" stroke-width="1"/><path d="M0 98.46H477" stroke="#5d5d5d" stroke-width="1"/><path d="M0 121.74H477" stroke="#5d5d5d" stroke-width="1"/><path d="M0 145.02H477" stroke="#5d5d5d" stroke-width="1"/><path d="M0 168.30H477" stroke="#454545" stroke-width="1.1"/><path d="M0 191.58H477" stroke="#5d5d5d" stroke-width="1"/><path d="M0 214.86H477" stroke="#5d5d5d" stroke-width="1"/><path d="M0 238.14H477" stroke="#5d5d5d" stroke-width="1"/><path d="M0 261.42H477" stroke="#5d5d5d" stroke-width="1"/><path d="M0 284.70H477" stroke="#5d5d5d" stroke-width="1"/><path d="M0 307.98H477" stroke="#5d5d5d" stroke-width="1"/><path d="M0 331.26H477" stroke="#5d5d5d" stroke-width="1"/><rect width="477" height="7" fill="url(#gv530131)"/><rect x="222.20" y="121.80" width="67.90" height="46.50" fill="#0a0808"/><path d="M232.60 122.80V167.80" stroke="#8a8a8a" stroke-width=".8"/><path d="M236.30 122.80V167.80" stroke="#8a8a8a" stroke-width=".8"/><path d="M239.40 122.80V167.80" stroke="#8a8a8a" stroke-width=".8"/><path d="M242.30 122.80V167.80" stroke="#8a8a8a" stroke-width=".8"/><path d="M245.40 122.80V167.80" stroke="#8a8a8a" stroke-width=".8"/><path d="M248.30 122.80V167.80" stroke="#8a8a8a" stroke-width=".8"/><path d="M251.50 122.80V167.80" stroke="#8a8a8a" stroke-width=".8"/><path d="M260.60 122.80V167.80" stroke="#8a8a8a" stroke-width=".8"/><path d="M263.40 122.80V167.80" stroke="#8a8a8a" stroke-width=".8"/><path d="M266.50 122.80V167.80" stroke="#8a8a8a" stroke-width=".8"/><path d="M269.40 122.80V167.80" stroke="#8a8a8a" stroke-width=".8"/><path d="M272.50 122.80V167.80" stroke="#8a8a8a" stroke-width=".8"/><path d="M275.40 122.80V167.80" stroke="#8a8a8a" stroke-width=".8"/><path d="M277.50 122.80V167.80" stroke="#8a8a8a" stroke-width=".8"/><rect x="253.70" y="122.80" width="5.2" height="45" fill="#6a6a6a"/><path d="M256.30 122.80V167.80" stroke="#3a3a3a" stroke-width=".8"/><path d="M157.40 168.30V122.00H343.90V168.30" fill="none" stroke="#080808" stroke-width="1.300"/><path d="M238.50 121.50V1" stroke="#2d68d8" stroke-width="1.3"/><path d="M234.30 7.00L238.50 1.00L242.70 7.00" fill="none" stroke="#2d68d8" stroke-width="1.2"/><path d="M344.00 168.30H475" stroke="#c9504c" stroke-width="1.2"/><path d="M469.00 164.50L475.50 168.30L469.00 172.10" fill="none" stroke="#c9504c" stroke-width="1.2"/><circle cx="157.40" cy="168.30" r="2.600" fill="#2b2b2b"/><circle cx="343.90" cy="168.30" r="2.600" fill="#2b2b2b"/><rect x="219.90" y="166.70" width="5.2" height="4.4" fill="#fff"/><rect x="239.40" y="166.70" width="5.2" height="4.4" fill="#fff"/><rect x="267.40" y="166.70" width="5.2" height="4.4" fill="#fff"/><rect x="287.40" y="166.70" width="5.2" height="4.4" fill="#fff"/><rect x="253.40" y="166.70" width="5.2" height="4.4" fill="#f5a030"/><path d="M435.80 21.00V43.0" stroke="#3d7be8" stroke-width="1.4"/><path d="M440.50 43.80H458" stroke="#e05050" stroke-width="1.4"/></svg>
<div class="a" style="left:533.3px;top:136.2px;width:31.5px;height:17.8px;background:rgba(0,0,0,0.115);border-radius:3px;"></div>
<span class="t" id="t44" style="left:536.5px;top:136.90px;font-size:13.2px;line-height:20px;color:#e6e6e6;transform:scaleX(0.9858);transform-origin:0 50%;">上面</span>
<div class="a" style="left:877.2px;top:445px;width:124.7px;height:17.7px;background:rgba(0,0,0,0.115);border-radius:3px;"></div>
<span class="t" id="t45" style="left:880px;top:444.95px;font-size:13.2px;line-height:20px;color:#e6e6e6;transform:scaleX(0.9857);transform-origin:0 50%;"><span class="k" style="margin-right:-15.31px;transform:scale(0.71,1.2)">グリッド</span>間隔 <span style="font-size:1.09em">: 50 cm</span></span>
<span class="t" id="t46" style="left:965.8px;top:133.80px;font-size:12.5px;line-height:20px;color:#3d7be8;transform:translateX(-50%) scaleX(1.0000);transform-origin:50% 50%;">Z</span>
<span class="t" id="t47" style="left:965.8px;top:166.80px;font-size:12.5px;line-height:20px;color:#3fcf6a;transform:translateX(-50%) scaleX(1.0000);transform-origin:50% 50%;">Y</span>
<span class="t" id="t48" style="left:997px;top:167.00px;font-size:12.5px;line-height:20px;color:#e05050;transform:translateX(-50%) scaleX(1.0000);transform-origin:50% 50%;">X</span>
<div class="a" style="left:46px;top:470px;width:481px;height:30px;background:#2b2b2b;"></div>
<span class="t" id="t49" style="left:56.7px;top:476.20px;font-size:13.2px;line-height:20px;color:#c9c9c9;transform:scaleX(0.9290);transform-origin:0 50%;"><span class="k" style="margin-right:-11.48px;transform:scale(0.71,1.2)">ビュー</span></span>
<span class="t" id="t50" style="left:101.6px;top:476.20px;font-size:13.2px;line-height:20px;color:#c9c9c9;transform:scaleX(1.0394);transform-origin:0 50%;"><span class="k" style="margin-right:-11.48px;transform:scale(0.71,1.2)">カメラ</span></span>
<span class="t" id="t51" style="left:149.5px;top:476.20px;font-size:13.2px;line-height:20px;color:#c9c9c9;transform:scaleX(1.0047);transform-origin:0 50%;">表示</span>
<span class="t" id="t52" style="left:194.2px;top:476.20px;font-size:13.2px;line-height:20px;color:#c9c9c9;transform:scaleX(1.0553);transform-origin:0 50%;"><span class="k" style="margin-right:-19.14px;transform:scale(0.71,1.2)">オプション</span></span>
<span class="t" id="t53" style="left:262.1px;top:476.20px;font-size:13.2px;line-height:20px;color:#c9c9c9;transform:scaleX(1.0402);transform-origin:0 50%;"><span class="k" style="margin-right:-15.31px;transform:scale(0.71,1.2)">フィルタ</span></span>
<span class="t" id="t54" style="left:319.2px;top:476.20px;font-size:13.2px;line-height:20px;color:#c9c9c9;transform:scaleX(1.1960);transform-origin:0 50%;"><span class="k" style="margin-right:-11.48px;transform:scale(0.71,1.2)">パネル</span></span>
<svg class="a" style="left:427px;top:470px" width="100" height="30" viewBox="427 470 100 30"><g transform="translate(438.40 485.50)"><path d="M-3.300 2V-6.800a1.150 1.150 0 0 1 2.300 0V-1h.8V-8a1.150 1.150 0 0 1 2.300 0V-1h.8V-7.200a1.150 1.150 0 0 1 2.300 0V-.5h.8V-4.300a1.150 1.150 0 0 1 2.300 0V3C8.600 7.500 5.500 9.100 2.500 9.100C-.5 9.100-2.500 8-4.500 5L-8.400-.5a1.300 1.300 0 0 1 2-1.600Z" fill="#8e8e8e"/></g><path d="M464 476.7L469.2 481.9H465.3V486.4H473L464 494.3L455 486.4H462.7V481.9H458.8Z" fill="#8e8e8e"/><path d="M483.80 479.30A8 8 0 1 0 494.40 479.60" stroke="#8e8e8e" stroke-width="1.700" fill="none"/><circle cx="493.70" cy="478.60" r="2.300" fill="#8e8e8e"/><circle cx="489" cy="485.5" r="2.700" fill="#8e8e8e"/><rect x="505.75" y="477.60" width="16.600" height="15.800" rx="1.800" stroke="#8e8e8e" stroke-width="1.700" fill="none"/><path d="M505.75 483.00H516.60V493.50" stroke="#8e8e8e" stroke-width="1.700" fill="none"/></svg>
<svg class="a" style="left:46px;top:500px;" width="479.29999999999995" height="333.79999999999995" viewBox="0 0 479.29999999999995 333.79999999999995"><defs><linearGradient id="gv46500" x1="0" y1="0" x2="0" y2="1"><stop offset="0" stop-color="#000" stop-opacity=".16"/><stop offset="1" stop-color="#000" stop-opacity="0"/></linearGradient></defs><rect width="479.29999999999995" height="333.79999999999995" fill="#686868"/><path d="M7.80 0V333.79999999999995" stroke="#4a4a4a" stroke-width="1.3"/><path d="M31.08 0V333.79999999999995" stroke="#5d5d5d" stroke-width="1"/><path d="M54.36 0V333.79999999999995" stroke="#5d5d5d" stroke-width="1"/><path d="M77.64 0V333.79999999999995" stroke="#5d5d5d" stroke-width="1"/><path d="M100.92 0V333.79999999999995" stroke="#5d5d5d" stroke-width="1"/><path d="M124.20 0V333.79999999999995" stroke="#5d5d5d" stroke-width="1"/><path d="M147.48 0V333.79999999999995" stroke="#5d5d5d" stroke-width="1"/><path d="M170.76 0V333.79999999999995" stroke="#5d5d5d" stroke-width="1"/><path d="M194.04 0V333.79999999999995" stroke="#5d5d5d" stroke-width="1"/><path d="M217.32 0V333.79999999999995" stroke="#5d5d5d" stroke-width="1"/><path d="M240.60 0V333.79999999999995" stroke="#454545" stroke-width="1.1"/><path d="M263.88 0V333.79999999999995" stroke="#5d5d5d" stroke-width="1"/><path d="M287.16 0V333.79999999999995" stroke="#5d5d5d" stroke-width="1"/><path d="M310.44 0V333.79999999999995" stroke="#5d5d5d" stroke-width="1"/><path d="M333.72 0V333.79999999999995" stroke="#5d5d5d" stroke-width="1"/><path d="M357.00 0V333.79999999999995" stroke="#5d5d5d" stroke-width="1"/><path d="M380.28 0V333.79999999999995" stroke="#5d5d5d" stroke-width="1"/><path d="M403.56 0V333.79999999999995" stroke="#5d5d5d" stroke-width="1"/><path d="M426.84 0V333.79999999999995" stroke="#5d5d5d" stroke-width="1"/><path d="M450.12 0V333.79999999999995" stroke="#5d5d5d" stroke-width="1"/><path d="M473.40 0V333.79999999999995" stroke="#4a4a4a" stroke-width="1.3"/><path d="M0 4.24H479.29999999999995" stroke="#5d5d5d" stroke-width="1"/><path d="M0 27.52H479.29999999999995" stroke="#5d5d5d" stroke-width="1"/><path d="M0 50.80H479.29999999999995" stroke="#5d5d5d" stroke-width="1"/><path d="M0 74.08H479.29999999999995" stroke="#5d5d5d" stroke-width="1"/><path d="M0 97.36H479.29999999999995" stroke="#5d5d5d" stroke-width="1"/><path d="M0 120.64H479.29999999999995" stroke="#5d5d5d" stroke-width="1"/><path d="M0 143.92H479.29999999999995" stroke="#5d5d5d" stroke-width="1"/><path d="M0 167.20H479.29999999999995" stroke="#454545" stroke-width="1.1"/><path d="M0 190.48H479.29999999999995" stroke="#5d5d5d" stroke-width="1"/><path d="M0 213.76H479.29999999999995" stroke="#5d5d5d" stroke-width="1"/><path d="M0 237.04H479.29999999999995" stroke="#5d5d5d" stroke-width="1"/><path d="M0 260.32H479.29999999999995" stroke="#5d5d5d" stroke-width="1"/><path d="M0 283.60H479.29999999999995" stroke="#5d5d5d" stroke-width="1"/><path d="M0 306.88H479.29999999999995" stroke="#5d5d5d" stroke-width="1"/><path d="M0 330.16H479.29999999999995" stroke="#5d5d5d" stroke-width="1"/><rect width="479.29999999999995" height="7" fill="url(#gv46500)"/><rect x="240.60" y="119.60" width="45.90" height="68.20" fill="#0a0808"/><path d="M241.50 132.40H286.00" stroke="#8c8c8c" stroke-width=".8"/><path d="M241.50 137.10H286.00" stroke="#8c8c8c" stroke-width=".8"/><path d="M241.50 140.30H286.00" stroke="#8c8c8c" stroke-width=".8"/><path d="M241.50 143.30H286.00" stroke="#8c8c8c" stroke-width=".8"/><path d="M241.50 146.50H286.00" stroke="#8c8c8c" stroke-width=".8"/><path d="M241.50 149.70H286.00" stroke="#8c8c8c" stroke-width=".8"/><path d="M241.50 158.40H286.00" stroke="#8c8c8c" stroke-width=".8"/><path d="M241.50 161.20H286.00" stroke="#8c8c8c" stroke-width=".8"/><path d="M241.50 164.40H286.00" stroke="#8c8c8c" stroke-width=".8"/><path d="M241.50 170.40H286.00" stroke="#8c8c8c" stroke-width=".8"/><path d="M241.50 177.40H286.00" stroke="#8c8c8c" stroke-width=".8"/><rect x="241.30" y="152.00" width="44.600" height="4.500" fill="#6c6c6c"/><path d="M241.50 154.20H286.00" stroke="#444" stroke-width=".8"/><path d="M243.00 167.30H286.00" stroke="#3c60b8" stroke-width="1"/><path d="M240.60 74.80H286.80M240.60 261.00H286.80M240.60 74.80V261.00" fill="none" stroke="#2e2e2e" stroke-width="1.200"/><path d="M286.80 74.30V261.50" stroke="#060606" stroke-width="1.400"/><path d="M240.60 119.50V1" stroke="#35b060" stroke-width="1.300"/><path d="M236.40 7.00L240.60 1.00L244.80 7.00" fill="none" stroke="#35b860" stroke-width="1.200"/><path d="M287.00 167.20H477" stroke="#2d68d8" stroke-width="1.300"/><path d="M471.00 163.40L477.50 167.20L471.00 171.00" fill="none" stroke="#2d68d8" stroke-width="1.200"/><circle cx="240.60" cy="74.80" r="2.600" fill="#2b2b2b"/><circle cx="240.60" cy="261.00" r="2.600" fill="#2b2b2b"/><rect x="237.20" y="117.80" width="5.6" height="4.4" fill="#fff"/><rect x="237.20" y="137.60" width="5.6" height="4.4" fill="#fff"/><rect x="237.20" y="165.70" width="5.6" height="4.4" fill="#fff"/><rect x="237.20" y="185.20" width="5.6" height="4.4" fill="#fff"/><rect x="237.40" y="151.90" width="5.2" height="4.4" fill="#f5a030"/><path d="M437.20 19.50V41" stroke="#3fcf6a" stroke-width="1.400"/><path d="M442.00 42.30H459.5" stroke="#3d7be8" stroke-width="1.400"/></svg>
<div class="a" style="left:50.4px;top:503.4px;width:31.2px;height:16.9px;background:rgba(0,0,0,0.115);border-radius:3px;"></div>
<span class="t" id="t55" style="left:53.2px;top:503.65px;font-size:13.2px;line-height:20px;color:#e6e6e6;transform:scaleX(1.0047);transform-origin:0 50%;">右面</span>
<div class="a" style="left:395px;top:811.7px;width:125.8px;height:18.3px;background:rgba(0,0,0,0.115);border-radius:3px;"></div>
<span class="t" id="t56" style="left:398.3px;top:811.95px;font-size:13.2px;line-height:20px;color:#e6e6e6;transform:scaleX(0.9866);transform-origin:0 50%;"><span class="k" style="margin-right:-15.31px;transform:scale(0.71,1.2)">グリッド</span>間隔 <span style="font-size:1.09em">: 50 cm</span></span>
<span class="t" id="t57" style="left:483.2px;top:500.60px;font-size:12.5px;line-height:20px;color:#3fcf6a;transform:translateX(-50%) scaleX(1.0000);transform-origin:50% 50%;">Y</span>
<span class="t" id="t58" style="left:483.2px;top:533.70px;font-size:12.5px;line-height:20px;color:#e05050;transform:translateX(-50%) scaleX(1.0000);transform-origin:50% 50%;">X</span>
<span class="t" id="t59" style="left:514.9px;top:533.50px;font-size:12.5px;line-height:20px;color:#3d7be8;transform:translateX(-50%) scaleX(1.0000);transform-origin:50% 50%;">Z</span>
<div class="a" style="left:530px;top:470px;width:477.5px;height:30px;background:#2b2b2b;"></div>
<span class="t" id="t60" style="left:539.5px;top:476.20px;font-size:13.2px;line-height:20px;color:#c9c9c9;transform:scaleX(0.9290);transform-origin:0 50%;"><span class="k" style="margin-right:-11.48px;transform:scale(0.71,1.2)">ビュー</span></span>
<span class="t" id="t61" style="left:584.4px;top:476.20px;font-size:13.2px;line-height:20px;color:#c9c9c9;transform:scaleX(1.0394);transform-origin:0 50%;"><span class="k" style="margin-right:-11.48px;transform:scale(0.71,1.2)">カメラ</span></span>
<span class="t" id="t62" style="left:632.3px;top:476.20px;font-size:13.2px;line-height:20px;color:#c9c9c9;transform:scaleX(1.0047);transform-origin:0 50%;">表示</span>
<span class="t" id="t63" style="left:677px;top:476.20px;font-size:13.2px;line-height:20px;color:#c9c9c9;transform:scaleX(1.0553);transform-origin:0 50%;"><span class="k" style="margin-right:-19.14px;transform:scale(0.71,1.2)">オプション</span></span>
<span class="t" id="t64" style="left:744.9px;top:476.20px;font-size:13.2px;line-height:20px;color:#c9c9c9;transform:scaleX(1.0402);transform-origin:0 50%;"><span class="k" style="margin-right:-15.31px;transform:scale(0.71,1.2)">フィルタ</span></span>
<span class="t" id="t65" style="left:802px;top:476.20px;font-size:13.2px;line-height:20px;color:#c9c9c9;transform:scaleX(1.1960);transform-origin:0 50%;"><span class="k" style="margin-right:-11.48px;transform:scale(0.71,1.2)">パネル</span></span>
<svg class="a" style="left:907.5px;top:470px" width="100" height="30" viewBox="907.5 470 100 30"><g transform="translate(918.90 485.50)"><path d="M-3.300 2V-6.800a1.150 1.150 0 0 1 2.300 0V-1h.8V-8a1.150 1.150 0 0 1 2.300 0V-1h.8V-7.200a1.150 1.150 0 0 1 2.300 0V-.5h.8V-4.300a1.150 1.150 0 0 1 2.300 0V3C8.600 7.500 5.500 9.100 2.500 9.100C-.5 9.100-2.500 8-4.500 5L-8.400-.5a1.300 1.300 0 0 1 2-1.600Z" fill="#8e8e8e"/></g><path d="M944.5 476.7L949.7 481.9H945.8V486.4H953.5L944.5 494.3L935.5 486.4H943.2V481.9H939.3Z" fill="#8e8e8e"/><path d="M964.30 479.30A8 8 0 1 0 974.90 479.60" stroke="#8e8e8e" stroke-width="1.700" fill="none"/><circle cx="974.20" cy="478.60" r="2.300" fill="#8e8e8e"/><circle cx="969.5" cy="485.5" r="2.700" fill="#8e8e8e"/><rect x="986.25" y="477.60" width="16.600" height="15.800" rx="1.800" stroke="#8e8e8e" stroke-width="1.700" fill="none"/><path d="M986.25 483.00H997.10V493.50" stroke="#8e8e8e" stroke-width="1.700" fill="none"/></svg>
<svg class="a" style="left:530px;top:500px;" width="477" height="333.79999999999995" viewBox="0 0 477 333.79999999999995"><defs><linearGradient id="gv530500" x1="0" y1="0" x2="0" y2="1"><stop offset="0" stop-color="#000" stop-opacity=".16"/><stop offset="1" stop-color="#000" stop-opacity="0"/></linearGradient></defs><rect width="477" height="333.79999999999995" fill="#686868"/><path d="M20.40 0V333.79999999999995" stroke="#5d5d5d" stroke-width="1"/><path d="M60.00 0V333.79999999999995" stroke="#5d5d5d" stroke-width="1"/><path d="M99.60 0V333.79999999999995" stroke="#5d5d5d" stroke-width="1"/><path d="M139.20 0V333.79999999999995" stroke="#5d5d5d" stroke-width="1"/><path d="M178.80 0V333.79999999999995" stroke="#5d5d5d" stroke-width="1"/><path d="M218.40 0V333.79999999999995" stroke="#454545" stroke-width="1.1"/><path d="M258.00 0V333.79999999999995" stroke="#5d5d5d" stroke-width="1"/><path d="M297.60 0V333.79999999999995" stroke="#5d5d5d" stroke-width="1"/><path d="M337.20 0V333.79999999999995" stroke="#5d5d5d" stroke-width="1"/><path d="M376.80 0V333.79999999999995" stroke="#5d5d5d" stroke-width="1"/><path d="M416.40 0V333.79999999999995" stroke="#5d5d5d" stroke-width="1"/><path d="M456.00 0V333.79999999999995" stroke="#5d5d5d" stroke-width="1"/><path d="M0 6.00H477" stroke="#5d5d5d" stroke-width="1"/><path d="M0 45.60H477" stroke="#5d5d5d" stroke-width="1"/><path d="M0 85.20H477" stroke="#5d5d5d" stroke-width="1"/><path d="M0 124.80H477" stroke="#5d5d5d" stroke-width="1"/><path d="M0 164.40H477" stroke="#454545" stroke-width="1.1"/><path d="M0 204.00H477" stroke="#5d5d5d" stroke-width="1"/><path d="M0 243.60H477" stroke="#5d5d5d" stroke-width="1"/><path d="M0 283.20H477" stroke="#5d5d5d" stroke-width="1"/><path d="M0 322.80H477" stroke="#5d5d5d" stroke-width="1"/><rect width="477" height="7" fill="url(#gv530500)"/><rect x="80.40" y="8.60" width="316.40" height="316.40" fill="none" stroke="#a4a4a4" stroke-width="1.600"/><circle cx="247.50" cy="142.40" r="57.3" fill="none" stroke="#a0a0a0" stroke-width="1.100"/><path d="M218.40 164.40V1" stroke="#35b860" stroke-width="1.300"/><path d="M214.20 7.00L218.40 1.00L222.60 7.00" fill="none" stroke="#35b860" stroke-width="1.200"/><path d="M218.40 164.40H475" stroke="#c9504c" stroke-width="1.200"/><path d="M469.00 160.60L475.50 164.40L469.00 168.20" fill="none" stroke="#c9504c" stroke-width="1.200"/><path d="M223.70 85.10L271.30 85.10" stroke="#f4f4f4" stroke-width="1.400"/><path d="M223.70 199.70L271.30 199.70" stroke="#f4f4f4" stroke-width="1.400"/><path d="M190.20 118.60L190.20 166.20" stroke="#f4f4f4" stroke-width="1.400"/><path d="M304.80 118.60L304.80 166.20" stroke="#f4f4f4" stroke-width="1.400"/><rect x="221.00" y="82.40" width="5.4" height="5.4" fill="#fff"/><rect x="268.60" y="82.40" width="5.4" height="5.4" fill="#fff"/><rect x="221.00" y="197.00" width="5.4" height="5.4" fill="#fff"/><rect x="268.60" y="197.00" width="5.4" height="5.4" fill="#fff"/><rect x="187.50" y="115.90" width="5.4" height="5.4" fill="#fff"/><rect x="187.50" y="163.50" width="5.4" height="5.4" fill="#fff"/><rect x="302.10" y="115.90" width="5.4" height="5.4" fill="#fff"/><rect x="302.10" y="163.50" width="5.4" height="5.4" fill="#fff"/><rect x="245.10" y="82.70" width="4.8" height="4.8" fill="#f0a040"/><rect x="245.10" y="197.30" width="4.8" height="4.8" fill="#f0a040"/><rect x="187.80" y="140.00" width="4.8" height="4.8" fill="#f0a040"/><rect x="302.40" y="140.00" width="4.8" height="4.8" fill="#f0a040"/><circle cx="80.40" cy="8.60" r="2.600" fill="#2b2b2b"/><circle cx="396.80" cy="8.60" r="2.600" fill="#2b2b2b"/><circle cx="80.40" cy="325.00" r="2.600" fill="#2b2b2b"/><circle cx="396.80" cy="325.00" r="2.600" fill="#2b2b2b"/><path d="M435.20 19.50V41" stroke="#3fcf6a" stroke-width="1.400"/><path d="M440.00 42.30H458" stroke="#e05050" stroke-width="1.400"/></svg>
<div class="a" style="left:533.3px;top:503.4px;width:31.5px;height:16.9px;background:rgba(0,0,0,0.115);border-radius:3px;"></div>
<span class="t" id="t66" style="left:536.5px;top:503.65px;font-size:13.2px;line-height:20px;color:#e6e6e6;transform:scaleX(0.9858);transform-origin:0 50%;">前面</span>
<div class="a" style="left:877.2px;top:811.7px;width:124.7px;height:18.3px;background:rgba(0,0,0,0.115);border-radius:3px;"></div>
<span class="t" id="t67" style="left:880px;top:811.95px;font-size:13.2px;line-height:20px;color:#e6e6e6;transform:scaleX(0.9857);transform-origin:0 50%;"><span class="k" style="margin-right:-15.31px;transform:scale(0.71,1.2)">グリッド</span>間隔 <span style="font-size:1.09em">: 50 cm</span></span>
<span class="t" id="t68" style="left:965.2px;top:500.60px;font-size:12.5px;line-height:20px;color:#3fcf6a;transform:translateX(-50%) scaleX(1.0000);transform-origin:50% 50%;">Y</span>
<span class="t" id="t69" style="left:965.2px;top:533.50px;font-size:12.5px;line-height:20px;color:#3d7be8;transform:translateX(-50%) scaleX(1.0000);transform-origin:50% 50%;">Z</span>
<span class="t" id="t70" style="left:997px;top:533.50px;font-size:12.5px;line-height:20px;color:#e05050;transform:translateX(-50%) scaleX(1.0000);transform-origin:50% 50%;">X</span>
<div class="a" style="left:1057px;top:66.8px;width:386px;height:289.2px;background:#1b1b1b;"></div>
<div class="a" style="left:1058.5px;top:96px;width:384.5px;height:258.5px;background:#2b2b2b;"></div>
<div class="a" style="left:1057.8px;top:68px;width:89.2px;height:29px;background:#2b2b2b;border-radius:4px 4px 0 0;"></div>
<span class="t" id="t71" style="left:1072.8px;top:73.10px;font-size:13.2px;line-height:20px;color:#f2f2f2;transform:scaleX(1.0506);transform-origin:0 50%;font-weight:500;"><span class="k" style="margin-right:-22.97px;transform:scale(0.71,1.2)">オブジェクト</span></span>
<span class="t" id="t72" style="left:1163.2px;top:73.10px;font-size:13.2px;line-height:20px;color:#b4b4b4;transform:scaleX(1.0846);transform-origin:0 50%;"><span class="k" style="margin-right:-11.48px;transform:scale(0.71,1.2)">テイク</span></span>
<span class="t" id="t73" style="left:1097px;top:100.80px;font-size:13.2px;line-height:20px;color:#c9c9c9;transform:scaleX(1.0146);transform-origin:0 50%;"><span class="k" style="margin-right:-15.31px;transform:scale(0.71,1.2)">ファイル</span></span>
<span class="t" id="t74" style="left:1154.7px;top:100.80px;font-size:13.2px;line-height:20px;color:#c9c9c9;transform:scaleX(0.9972);transform-origin:0 50%;">編集</span>
<span class="t" id="t75" style="left:1199.7px;top:100.80px;font-size:13.2px;line-height:20px;color:#c9c9c9;transform:scaleX(0.9972);transform-origin:0 50%;">表示</span>
<span class="t" id="t76" style="left:1244px;top:100.80px;font-size:13.2px;line-height:20px;color:#c9c9c9;transform:scaleX(1.0506);transform-origin:0 50%;"><span class="k" style="margin-right:-22.97px;transform:scale(0.71,1.2)">オブジェクト</span></span>
<div class="a" style="left:1058.5px;top:124.6px;width:384.5px;height:1.0px;background:#222;"></div>
<div class="a" style="left:1058.5px;top:125.8px;width:381.3px;height:24.5px;background:#1f1f1f;"></div>
<div class="a" style="left:1238px;top:125.6px;width:1px;height:228.9px;background:#202020;"></div>
<svg class="a" style="left:1058px;top:98px" width="385" height="80" viewBox="1058 98 385 80" fill="none" stroke-linecap="round" stroke-linejoin="round"><rect x="1065.6" y="104.15" width="18.7" height="2.4" fill="#9a9a9a"/><rect x="1065.6" y="108.80" width="18.7" height="2.4" fill="#9a9a9a"/><rect x="1065.6" y="113.45" width="18.7" height="2.4" fill="#9a9a9a"/><path d="M1322.7 106.8L1328.2 110.7L1322.7 114.60000000000001" stroke="#b0b0b0" stroke-width="1.700" stroke-linecap="butt" stroke-linejoin="miter"/><circle cx="1353.1" cy="109.1" r="4.900" stroke="#a2a2a2" stroke-width="1.900"/><path d="M1356.6999999999998 112.69999999999999L1363.3999999999999 118.8" stroke="#a2a2a2" stroke-width="2" stroke-linecap="butt"/><path d="M1372.200 108.800L1380 102L1387.800 108.800" stroke="#a2a2a2" stroke-width="2" stroke-linecap="butt" stroke-linejoin="miter"/><path d="M1373.600 108V117.300H1377.300V112.600H1382.700V117.300H1386.400V108" stroke="#a2a2a2" stroke-width="2" stroke-linecap="butt" stroke-linejoin="miter"/><path d="M1395.85 105.4H1413.85M1398.9499999999998 110.60000000000001H1410.75M1402.05 115.60000000000001H1407.6499999999999" stroke="#a2a2a2" stroke-width="2.200" stroke-linecap="butt"/><path d="M1429.0 103H1422.5V117.2H1437.4V111" stroke="#a2a2a2" stroke-width="2" stroke-linecap="butt" stroke-linejoin="miter"/><path d="M1426.7 113.8L1437.8000000000002 102.6M1431.0 102H1438.4V110" stroke="#a2a2a2" stroke-width="2" stroke-linecap="butt" stroke-linejoin="miter"/><path d="M1069.800 125.800V133M1075.700 139.400H1081M1084.600 150.700V164.200H1096.200" stroke="#7c7c7c" stroke-width="1"/><rect x="1064.300" y="133.200" width="11.300" height="11.300" stroke="#9a9a9a" stroke-width="1.100"/><path d="M1066.600 139H1073.500" stroke="#c4c4c4" stroke-width="1.300" stroke-linecap="butt"/><path d="M1090.200 130.900L1097.100 134.800L1090.200 138.500L1082.900 134.800Z" fill="#62dc7d"/><path d="M1097.200 135.700V143.100L1090.800 146.700V139.200Z" fill="#5ad076"/><path d="M1083.400 136L1089.600 139.300V146L1083.400 142.700Z" fill="#0c0c0c" stroke="#fff" stroke-width="1.300" stroke-linejoin="miter"/><path d="M1105.100 157.300C1101 157.500 1097.500 160 1098.800 162.200C1100.500 165 1111.500 164 1112.500 167.300C1113 169.300 1109 170.600 1105.100 170.600" stroke="#7fcff2" stroke-width="1.500"/><circle cx="1105.100" cy="157.300" r="2" fill="#fff"/><circle cx="1105.100" cy="170.600" r="2" fill="#fff"/><rect x="1183.800" y="132.30" width="13.200" height="12.500" rx="2.500" fill="#4a4a4a"/><path d="M1187.300 142.35L1193.700 134.85" stroke="#1e1e1e" stroke-width="2.300" stroke-linecap="round"/><circle cx="1208.100" cy="133.70" r="3.800" fill="#595959"/><circle cx="1208.100" cy="144.50" r="3.800" fill="#595959"/><path d="M1217.400 138.30L1222.700 143.10L1231.500 133.40" stroke="#55d878" stroke-width="2.800" stroke-linecap="butt" stroke-linejoin="miter"/><rect x="1183.800" y="156.85" width="13.200" height="12.500" rx="2.500" fill="#4a4a4a"/><path d="M1187.300 166.90L1193.700 159.40" stroke="#1e1e1e" stroke-width="2.300" stroke-linecap="round"/><circle cx="1208.100" cy="158.25" r="3.800" fill="#595959"/><circle cx="1208.100" cy="169.05" r="3.800" fill="#595959"/><path d="M1217.400 162.85L1222.700 167.65L1231.500 157.95" stroke="#55d878" stroke-width="2.800" stroke-linecap="butt" stroke-linejoin="miter"/><path d="M1244.200 145.200V130.100H1259.600" stroke="#9292f8" stroke-width="1.400" stroke-linecap="butt" stroke-linejoin="miter"/><path d="M1246.500 132.700H1255.500C1255.500 137.500 1251.500 141 1246.500 141Z" fill="#9292f8"/></svg>
<span class="t" id="t77" style="left:1104.8px;top:130.40px;font-size:13.2px;line-height:20px;color:#d98634;transform:scaleX(1.0223);transform-origin:0 50%;">押<span class="k" style="margin-right:-3.83px;transform:scale(0.71,1.2)">し</span>出<span class="k" style="margin-right:-3.83px;transform:scale(0.71,1.2)">し</span></span>
<span class="t" id="t78" style="left:1120.1px;top:154.60px;font-size:13.2px;line-height:20px;color:#f2b234;transform:scaleX(0.9600);transform-origin:0 50%;">長方形<span style="font-size:1.09em">.1</span></span>
<div class="a" style="left:1057px;top:356px;width:386px;height:292px;background:#1b1b1b;"></div>
<div class="a" style="left:1058.5px;top:386.5px;width:384.5px;height:260.0px;background:#2b2b2b;"></div>
<div class="a" style="left:1057.8px;top:359px;width:57.9px;height:28px;background:#2b2b2b;border-radius:4px 4px 0 0;"></div>
<span class="t" id="t79" style="left:1073px;top:363.90px;font-size:13.2px;line-height:20px;color:#f2f2f2;transform:scaleX(1.0427);transform-origin:0 50%;font-weight:500;">属性</span>
<span class="t" id="t80" style="left:1097px;top:391.80px;font-size:13.2px;line-height:20px;color:#c9c9c9;transform:scaleX(1.0323);transform-origin:0 50%;"><span class="k" style="margin-right:-11.48px;transform:scale(0.71,1.2)">モード</span></span>
<span class="t" id="t81" style="left:1144.5px;top:391.80px;font-size:13.2px;line-height:20px;color:#c9c9c9;transform:scaleX(1.0237);transform-origin:0 50%;">編集</span>
<div class="a" style="left:1058.5px;top:415px;width:384.5px;height:1px;background:#222;"></div>
<svg class="a" style="left:1058px;top:388px" width="385" height="60" viewBox="1058 388 385 60" fill="none" stroke-linecap="round" stroke-linejoin="round"><rect x="1065.6" y="395.15" width="18.7" height="2.4" fill="#9a9a9a"/><rect x="1065.6" y="399.80" width="18.7" height="2.4" fill="#9a9a9a"/><rect x="1065.6" y="404.45" width="18.7" height="2.4" fill="#9a9a9a"/><path d="M1190.3 397.40000000000003L1195.8 401.3L1190.3 405.2" stroke="#b0b0b0" stroke-width="1.700" stroke-linecap="butt" stroke-linejoin="miter"/><path d="M1262.400 400.600H1248M1254.100 393.600L1247.100 400.600L1254.100 407.600" stroke="#a2a2a2" stroke-width="2.300" stroke-linecap="butt" stroke-linejoin="miter"/><path d="M1272.800 400.600H1287.200M1281.100 393.600L1288.100 400.600L1281.100 407.600" stroke="#4a4a4a" stroke-width="2.300" stroke-linecap="butt" stroke-linejoin="miter"/><path d="M1304.700 408.900V394.500M1297.700 400.600L1304.700 393.600L1311.700 400.600" stroke="#a2a2a2" stroke-width="2.300" stroke-linecap="butt" stroke-linejoin="miter"/><circle cx="1327.8" cy="399.2" r="4.900" stroke="#a2a2a2" stroke-width="1.900"/><path d="M1331.3999999999999 402.8L1338.1 408.9" stroke="#a2a2a2" stroke-width="2" stroke-linecap="butt"/><path d="M1345.85 396H1363.85M1348.9499999999998 401.2H1360.75M1352.05 406.2H1357.6499999999999" stroke="#a2a2a2" stroke-width="2.200" stroke-linecap="butt"/><rect x="1374.300" y="400.200" width="11.100" height="8.700" rx="1.200" stroke="#a2a2a2" stroke-width="2"/><path d="M1376.600 400V397A3.400 3.400 0 0 1 1383.300 396.300" stroke="#a2a2a2" stroke-width="1.900" stroke-linecap="butt"/><circle cx="1379.900" cy="404.500" r="1.500" fill="#a2a2a2"/><circle cx="1404.900" cy="401" r="9.100" stroke="#a2a2a2" stroke-width="1.900"/><circle cx="1404.900" cy="401" r="3" stroke="#a2a2a2" stroke-width="1.800"/><path d="M1429.0 393.7H1422.5V407.9H1437.4V401.7" stroke="#a2a2a2" stroke-width="2" stroke-linecap="butt" stroke-linejoin="miter"/><path d="M1426.7 404.5L1437.8000000000002 393.3M1431.0 392.7H1438.4V400.7" stroke="#a2a2a2" stroke-width="2" stroke-linecap="butt" stroke-linejoin="miter"/><path d="M1079.600 425.900C1075 426 1069.800 428.300 1071.200 431C1073.500 435 1088 433.500 1089.200 437.600C1090 440.500 1084 442.500 1079.600 442.500" stroke="#7fcff2" stroke-width="1.500"/><circle cx="1079.800" cy="425.900" r="2.300" fill="#fff"/><circle cx="1079.600" cy="442.500" r="2.300" fill="#fff"/></svg>
<span class="t" id="t82" style="left:1099px;top:424.20px;font-size:13.2px;line-height:20px;color:#b8b8b8;transform:scaleX(1.0330);transform-origin:0 50%;"><span class="k" style="margin-right:-19.14px;transform:scale(0.71,1.2)">スプライン</span><span style="font-size:1.09em"> </span><span style="font-size:1.09em">[</span>長方形<span style="font-size:1.09em">.1]</span></span>
<div class="a" style="left:1291.5px;top:422.3px;width:143.5px;height:22.6px;background:#3c3c3c;border-radius:8px;"></div>
<div class="a" style="left:1410px;top:422.3px;width:25px;height:22.6px;background:#383838;border-radius:0 8px 8px 0;"></div>
<div class="a" style="left:1409.5px;top:422.3px;width:1.0px;height:22.6px;background:#2c2c2c;"></div>
<span class="t" id="t83" style="left:1300.5px;top:424.70px;font-size:13.2px;line-height:20px;color:#dcdcdc;transform:scaleX(1.1107);transform-origin:0 50%;"><span class="k" style="margin-right:-15.31px;transform:scale(0.71,1.2)">カスタム</span></span>
<svg class="a" style="left:1415.500px;top:429.800px" width="12" height="8" viewBox="0 0 12 8"><path d="M1.300 1.200H10.700L6 6.900Z" fill="#c6c6c6"/></svg>
<div class="a" style="left:1069.2px;top:452.5px;width:49.6px;height:23.6px;background:#3a3a3a;border-radius:5px;"></div>
<span class="t" id="t84" style="left:1080.5px;top:455.20px;font-size:13.2px;line-height:20px;color:#cdcdcd;transform:scaleX(1.0427);transform-origin:0 50%;">基本</span>
<div class="a" style="left:1124px;top:452.5px;width:49.7px;height:23.6px;background:#3a3a3a;border-radius:5px;"></div>
<span class="t" id="t85" style="left:1135px;top:455.20px;font-size:13.2px;line-height:20px;color:#cdcdcd;transform:scaleX(1.0427);transform-origin:0 50%;">座標</span>
<div class="a" style="left:1179px;top:452.5px;width:82.3px;height:23.6px;background:#5558a6;border-radius:5px;"></div>
<span class="t" id="t86" style="left:1190px;top:455.20px;font-size:13.2px;line-height:20px;color:#f4f4f4;transform:scaleX(1.0684);transform-origin:0 50%;font-weight:500;"><span class="k" style="margin-right:-22.97px;transform:scale(0.71,1.2)">オブジェクト</span></span>
<span class="t" id="t87" style="left:1069.7px;top:487.40px;font-size:13.2px;line-height:20px;color:#f2f2f2;transform:scaleX(1.1492);transform-origin:0 50%;font-weight:500;"><span class="k" style="margin-right:-26.80px;transform:scale(0.71,1.2)">オブジェクトの</span>属性</span>
<span class="t" id="t88" style="left:1097px;top:514.40px;font-size:13.2px;line-height:20px;color:#c4c4c4;transform:scaleX(1.0323);transform-origin:0 50%;"><span class="k" style="margin-right:-11.48px;transform:scale(0.71,1.2)">タイプ</span></span>
<span class="t" id="t89" style="left:1097px;top:539.90px;font-size:13.2px;line-height:20px;color:#c4c4c4;transform:scaleX(1.0731);transform-origin:0 50%;"><span class="k" style="margin-right:-22.97px;transform:scale(0.71,1.2)">スプラインを</span>閉<span class="k" style="margin-right:-7.66px;transform:scale(0.71,1.2)">じる</span></span>
<span class="t" id="t90" style="left:1097px;top:564.90px;font-size:13.2px;line-height:20px;color:#c4c4c4;transform:scaleX(1.0363);transform-origin:0 50%;">補間法</span>
<span class="t" id="t91" style="left:1097px;top:591.50px;font-size:13.2px;line-height:20px;color:#5e5e5e;transform:scaleX(1.0363);transform-origin:0 50%;">分割数</span>
<span class="t" id="t92" style="left:1097px;top:618.90px;font-size:13.2px;line-height:20px;color:#c4c4c4;transform:scaleX(1.0427);transform-origin:0 50%;">分割角度</span>
<div class="a" style="left:1197.5px;top:512.4px;width:218.2px;height:22.2px;background:#3a3a3a;border-radius:4px;"></div>
<span class="t" id="t93" style="left:1207px;top:514.40px;font-size:13.2px;line-height:20px;color:#d0d0d0;transform:scaleX(1.1746);transform-origin:0 50%;"><span class="k" style="margin-right:-11.48px;transform:scale(0.71,1.2)">ベジエ</span></span>
<svg class="a" style="left:1398.1000000000001px;top:519.9px" width="12" height="8" viewBox="0 0 12 8"><path d="M1.300 1.300H10.700L6 6.800Z" fill="#b0b0b0"/></svg>
<div class="a" style="left:1197.5px;top:541.3px;width:15.9px;height:15.5px;background:#5558a6;border-radius:3px;"></div>
<div class="a" style="left:1197.5px;top:563px;width:218.2px;height:22px;background:#3a3a3a;border-radius:4px;"></div>
<span class="t" id="t94" style="left:1207px;top:564.90px;font-size:13.2px;line-height:20px;color:#d0d0d0;transform:scaleX(1.0427);transform-origin:0 50%;">最適</span>
<svg class="a" style="left:1398.1000000000001px;top:570.4px" width="12" height="8" viewBox="0 0 12 8"><path d="M1.300 1.300H10.700L6 6.800Z" fill="#b0b0b0"/></svg>
<div class="a" style="left:1197.5px;top:589.5px;width:92.5px;height:21.2px;background:#2f2f2f;border-radius:4px;"></div>
<span class="t" id="t95" style="left:1243.7px;top:590.30px;font-size:13.5px;line-height:20px;color:#6c6c6c;transform:translateX(-50%) scaleX(1.0000);transform-origin:50% 50%;">8</span>
<div class="a" style="left:1197.5px;top:616.4px;width:92.5px;height:21.6px;background:#1c1c1c;border-radius:4px;"></div>
<span class="t" id="t96" style="left:1243.7px;top:617.50px;font-size:13.5px;line-height:20px;color:#e0e0e0;transform:translateX(-50%) scaleX(1.0000);transform-origin:50% 50%;">5 °</span>
<div class="a" style="left:1424.3px;top:481.6px;width:5.4px;height:142.8px;background:#3c3c3c;border-radius:3px;"></div>
<svg class="a" style="left:1066px;top:510px" width="150" height="130" viewBox="1066 510 150 130" fill="none" stroke-linecap="round" stroke-linejoin="round"><circle cx="1077.600" cy="523.5" r="8.800" fill="#272727"/><path d="M1077.600 518.6L1082.500 523.5L1077.600 528.4L1072.700 523.5Z" stroke="#bcbcbc" stroke-width="1.500" stroke-linejoin="miter"/><circle cx="1077.600" cy="549" r="8.800" fill="#272727"/><path d="M1077.600 544.1L1082.500 549L1077.600 553.9L1072.700 549Z" stroke="#bcbcbc" stroke-width="1.500" stroke-linejoin="miter"/><circle cx="1077.600" cy="574" r="8.800" fill="#272727"/><path d="M1077.600 569.1L1082.500 574L1077.600 578.9L1072.700 574Z" stroke="#bcbcbc" stroke-width="1.500" stroke-linejoin="miter"/><circle cx="1077.600" cy="600.6" r="8.800" fill="#272727"/><path d="M1077.600 595.7L1082.500 600.6L1077.600 605.5L1072.700 600.6Z" stroke="#454545" stroke-width="1.500" stroke-linejoin="miter"/><circle cx="1077.600" cy="628" r="8.800" fill="#272727"/><path d="M1077.600 623.1L1082.500 628L1077.600 632.9L1072.700 628Z" stroke="#bcbcbc" stroke-width="1.500" stroke-linejoin="miter"/><path d="M1201.300 549.300L1204.300 552.300L1209.800 546" stroke="#fff" stroke-width="2" stroke-linecap="butt" stroke-linejoin="miter"/></svg>
<div class="a" style="left:1057px;top:648px;width:386px;height:292px;background:#1b1b1b;"></div>
<div class="a" style="left:1058.5px;top:649px;width:384.5px;height:290px;background:#2b2b2b;"></div>
<svg class="a" style="left:1064px;top:656px" width="24" height="20" viewBox="1064 656 24 20" fill="none" stroke-linecap="round" stroke-linejoin="round"><rect x="1065.6" y="659.85" width="18.7" height="2.5" fill="#f4f4f4"/><rect x="1065.6" y="664.75" width="18.7" height="2.5" fill="#f4f4f4"/><rect x="1065.6" y="669.65" width="18.7" height="2.5" fill="#f4f4f4"/></svg>
<div class="a" style="left:1172.9px;top:653.7px;width:24.6px;height:24.6px;border-radius:50%;background:#363636"></div>
<div class="a" style="left:1206.2px;top:654.6px;width:136.5px;height:23.2px;background:#3a3a3a;border-radius:4px;"></div>
<span class="t" id="t97" style="left:1215.5px;top:656.40px;font-size:13.2px;line-height:20px;color:#d0d0d0;transform:scaleX(1.0258);transform-origin:0 50%;"><span class="k" style="margin-right:-22.97px;transform:scale(0.71,1.2)">オブジェクト</span><span style="font-size:1.09em">(</span>相対<span style="font-size:1.09em">)</span></span>
<svg class="a" style="left:1325.1000000000001px;top:662.6px" width="12" height="8" viewBox="0 0 12 8"><path d="M1.300 1.300H10.700L6 6.800Z" fill="#b0b0b0"/></svg>
<div class="a" style="left:1348.2px;top:654.6px;width:87.4px;height:23.2px;background:#323232;border-radius:4px;"></div>
<span class="t" id="t98" style="left:1358px;top:657.10px;font-size:13.2px;line-height:20px;color:#5c5c5c;transform:scaleX(1.1190);transform-origin:0 50%;"><span class="k" style="margin-right:-11.48px;transform:scale(0.71,1.2)">サイズ</span></span>
<svg class="a" style="left:1418.0px;top:662.6px" width="12" height="8" viewBox="0 0 12 8"><path d="M1.300 1.300H10.700L6 6.800Z" fill="#4c4c4c"/></svg>
<span class="t" id="t99" style="left:1070.5px;top:689.20px;font-size:14px;line-height:20px;color:#a0a0a0;transform:translateX(-50%) scaleX(1.0000);transform-origin:50% 50%;">X</span>
<div class="a" style="left:1082.3px;top:688.0px;width:113.3px;height:22.4px;background:#1d1d1d;border-radius:4px;"></div>
<span class="t" id="t100" style="left:1138.9499999999998px;top:689.20px;font-size:13.5px;line-height:20px;color:#e2e2e2;transform:translateX(-50%) scaleX(1.0000);transform-origin:50% 50%;">11.6869 cm</span>
<div class="a" style="left:1202.3px;top:688.0px;width:113.3px;height:22.4px;background:#1d1d1d;border-radius:4px;"></div>
<span class="t" id="t101" style="left:1258.9499999999998px;top:689.20px;font-size:13.5px;line-height:20px;color:#e2e2e2;transform:translateX(-50%) scaleX(1.0000);transform-origin:50% 50%;">0 °</span>
<div class="a" style="left:1322.4px;top:688.0px;width:112.5px;height:22.4px;background:#1d1d1d;border-radius:4px;"></div>
<span class="t" id="t102" style="left:1378.65px;top:689.20px;font-size:13.5px;line-height:20px;color:#e2e2e2;transform:translateX(-50%) scaleX(1.0000);transform-origin:50% 50%;">145 cm</span>
<span class="t" id="t103" style="left:1070.5px;top:716.40px;font-size:14px;line-height:20px;color:#a0a0a0;transform:translateX(-50%) scaleX(1.0000);transform-origin:50% 50%;">Y</span>
<div class="a" style="left:1082.3px;top:715.1999999999999px;width:113.3px;height:22.4px;background:#1d1d1d;border-radius:4px;"></div>
<span class="t" id="t104" style="left:1138.9499999999998px;top:716.40px;font-size:13.5px;line-height:20px;color:#e2e2e2;transform:translateX(-50%) scaleX(1.0000);transform-origin:50% 50%;">31.0995 cm</span>
<div class="a" style="left:1202.3px;top:715.1999999999999px;width:113.3px;height:22.4px;background:#1d1d1d;border-radius:4px;"></div>
<span class="t" id="t105" style="left:1258.9499999999998px;top:716.40px;font-size:13.5px;line-height:20px;color:#e2e2e2;transform:translateX(-50%) scaleX(1.0000);transform-origin:50% 50%;">0 °</span>
<div class="a" style="left:1322.4px;top:715.1999999999999px;width:112.5px;height:22.4px;background:#1d1d1d;border-radius:4px;"></div>
<span class="t" id="t106" style="left:1378.65px;top:716.40px;font-size:13.5px;line-height:20px;color:#e2e2e2;transform:translateX(-50%) scaleX(1.0000);transform-origin:50% 50%;">145 cm</span>
<span class="t" id="t107" style="left:1070.5px;top:743.90px;font-size:14px;line-height:20px;color:#a0a0a0;transform:translateX(-50%) scaleX(1.0000);transform-origin:50% 50%;">Z</span>
<div class="a" style="left:1082.3px;top:742.6999999999999px;width:113.3px;height:22.4px;background:#1d1d1d;border-radius:4px;"></div>
<span class="t" id="t108" style="left:1138.9499999999998px;top:743.90px;font-size:13.5px;line-height:20px;color:#e2e2e2;transform:translateX(-50%) scaleX(1.0000);transform-origin:50% 50%;">0 cm</span>
<div class="a" style="left:1202.3px;top:742.6999999999999px;width:113.3px;height:22.4px;background:#1d1d1d;border-radius:4px;"></div>
<span class="t" id="t109" style="left:1258.9499999999998px;top:743.90px;font-size:13.5px;line-height:20px;color:#e2e2e2;transform:translateX(-50%) scaleX(1.0000);transform-origin:50% 50%;">0 °</span>
<div class="a" style="left:1322.4px;top:742.6999999999999px;width:112.5px;height:22.4px;background:#1d1d1d;border-radius:4px;"></div>
<span class="t" id="t110" style="left:1378.65px;top:743.90px;font-size:13.5px;line-height:20px;color:#e2e2e2;transform:translateX(-50%) scaleX(1.0000);transform-origin:50% 50%;">0 cm</span>
<svg class="a" style="left:51px;top:838.2px" width="957" height="8.9" fill="#505050"><rect x="0.00" y="0.00" width="1.500" height="1.500"/><rect x="0.00" y="3.95" width="1.500" height="1.500"/><rect x="3.87" y="0.00" width="1.500" height="1.500"/><rect x="3.87" y="3.95" width="1.500" height="1.500"/><rect x="7.74" y="0.00" width="1.500" height="1.500"/><rect x="7.74" y="3.95" width="1.500" height="1.500"/><rect x="11.61" y="0.00" width="1.500" height="1.500"/><rect x="11.61" y="3.95" width="1.500" height="1.500"/><rect x="15.48" y="0.00" width="1.500" height="1.500"/><rect x="15.48" y="3.95" width="1.500" height="1.500"/><rect x="19.35" y="0.00" width="1.500" height="1.500"/><rect x="19.35" y="3.95" width="1.500" height="1.500"/><rect x="23.22" y="0.00" width="1.500" height="1.500"/><rect x="23.22" y="3.95" width="1.500" height="1.500"/><rect x="27.09" y="0.00" width="1.500" height="1.500"/><rect x="27.09" y="3.95" width="1.500" height="1.500"/><rect x="30.96" y="0.00" width="1.500" height="1.500"/><rect x="30.96" y="3.95" width="1.500" height="1.500"/><rect x="34.83" y="0.00" width="1.500" height="1.500"/><rect x="34.83" y="3.95" width="1.500" height="1.500"/><rect x="38.70" y="0.00" width="1.500" height="1.500"/><rect x="38.70" y="3.95" width="1.500" height="1.500"/><rect x="42.57" y="0.00" width="1.500" height="1.500"/><rect x="42.57" y="3.95" width="1.500" height="1.500"/><rect x="46.44" y="0.00" width="1.500" height="1.500"/><rect x="46.44" y="3.95" width="1.500" height="1.500"/><rect x="50.31" y="0.00" width="1.500" height="1.500"/><rect x="50.31" y="3.95" width="1.500" height="1.500"/><rect x="54.18" y="0.00" width="1.500" height="1.500"/><rect x="54.18" y="3.95" width="1.500" height="1.500"/><rect x="58.05" y="0.00" width="1.500" height="1.500"/><rect x="58.05" y="3.95" width="1.500" height="1.500"/><rect x="61.92" y="0.00" width="1.500" height="1.500"/><rect x="61.92" y="3.95" width="1.500" height="1.500"/><rect x="65.79" y="0.00" width="1.500" height="1.500"/><rect x="65.79" y="3.95" width="1.500" height="1.500"/><rect x="69.66" y="0.00" width="1.500" height="1.500"/><rect x="69.66" y="3.95" width="1.500" height="1.500"/><rect x="73.53" y="0.00" width="1.500" height="1.500"/><rect x="73.53" y="3.95" width="1.500" height="1.500"/><rect x="77.40" y="0.00" width="1.500" height="1.500"/><rect x="77.40" y="3.95" width="1.500" height="1.500"/><rect x="81.27" y="0.00" width="1.500" height="1.500"/><rect x="81.27" y="3.95" width="1.500" height="1.500"/><rect x="85.14" y="0.00" width="1.500" height="1.500"/><rect x="85.14" y="3.95" width="1.500" height="1.500"/><rect x="89.01" y="0.00" width="1.500" height="1.500"/><rect x="89.01" y="3.95" width="1.500" height="1.500"/><rect x="92.88" y="0.00" width="1.500" height="1.500"/><rect x="92.88" y="3.95" width="1.500" height="1.500"/><rect x="96.75" y="0.00" width="1.500" height="1.500"/><rect x="96.75" y="3.95" width="1.500" height="1.500"/><rect x="100.62" y="0.00" width="1.500" height="1.500"/><rect x="100.62" y="3.95" width="1.500" height="1.500"/><rect x="104.49" y="0.00" width="1.500" height="1.500"/><rect x="104.49" y="3.95" width="1.500" height="1.500"/><rect x="108.36" y="0.00" width="1.500" height="1.500"/><rect x="108.36" y="3.95" width="1.500" height="1.500"/><rect x="112.23" y="0.00" width="1.500" height="1.500"/><rect x="112.23" y="3.95" width="1.500" height="1.500"/><rect x="116.10" y="0.00" width="1.500" height="1.500"/><rect x="116.10" y="3.95" width="1.500" height="1.500"/><rect x="119.97" y="0.00" width="1.500" height="1.500"/><rect x="119.97" y="3.95" width="1.500" height="1.500"/><rect x="123.84" y="0.00" width="1.500" height="1.500"/><rect x="123.84" y="3.95" width="1.500" height="1.500"/><rect x="127.71" y="0.00" width="1.500" height="1.500"/><rect x="127.71" y="3.95" width="1.500" height="1.500"/><rect x="131.58" y="0.00" width="1.500" height="1.500"/><rect x="131.58" y="3.95" width="1.500" height="1.500"/><rect x="135.45" y="0.00" width="1.500" height="1.500"/><rect x="135.45" y="3.95" width="1.500" height="1.500"/><rect x="139.32" y="0.00" width="1.500" height="1.500"/><rect x="139.32" y="3.95" width="1.500" height="1.500"/><rect x="143.19" y="0.00" width="1.500" height="1.500"/><rect x="143.19" y="3.95" width="1.500" height="1.500"/><rect x="147.06" y="0.00" width="1.500" height="1.500"/><rect x="147.06" y="3.95" width="1.500" height="1.500"/><rect x="150.93" y="0.00" width="1.500" height="1.500"/><rect x="150.93" y="3.95" width="1.500" height="1.500"/><rect x="154.80" y="0.00" width="1.500" height="1.500"/><rect x="154.80" y="3.95" width="1.500" height="1.500"/><rect x="158.67" y="0.00" width="1.500" height="1.500"/><rect x="158.67" y="3.95" width="1.500" height="1.500"/><rect x="162.54" y="0.00" width="1.500" height="1.500"/><rect x="162.54" y="3.95" width="1.500" height="1.500"/><rect x="166.41" y="0.00" width="1.500" height="1.500"/><rect x="166.41" y="3.95" width="1.500" height="1.500"/><rect x="170.28" y="0.00" width="1.500" height="1.500"/><rect x="170.28" y="3.95" width="1.500" height="1.500"/><rect x="174.15" y="0.00" width="1.500" height="1.500"/><rect x="174.15" y="3.95" width="1.500" height="1.500"/><rect x="178.02" y="0.00" width="1.500" height="1.500"/><rect x="178.02" y="3.95" width="1.500" height="1.500"/><rect x="181.89" y="0.00" width="1.500" height="1.500"/><rect x="181.89" y="3.95" width="1.500" height="1.500"/><rect x="185.76" y="0.00" width="1.500" height="1.500"/><rect x="185.76" y="3.95" width="1.500" height="1.500"/><rect x="189.63" y="0.00" width="1.500" height="1.500"/><rect x="189.63" y="3.95" width="1.500" height="1.500"/><rect x="193.50" y="0.00" width="1.500" height="1.500"/><rect x="193.50" y="3.95" width="1.500" height="1.500"/><rect x="197.37" y="0.00" width="1.500" height="1.500"/><rect x="197.37" y="3.95" width="1.500" height="1.500"/><rect x="201.24" y="0.00" width="1.500" height="1.500"/><rect x="201.24" y="3.95" width="1.500" height="1.500"/><rect x="205.11" y="0.00" width="1.500" height="1.500"/><rect x="205.11" y="3.95" width="1.500" height="1.500"/><rect x="208.98" y="0.00" width="1.500" height="1.500"/><rect x="208.98" y="3.95" width="1.500" height="1.500"/><rect x="212.85" y="0.00" width="1.500" height="1.500"/><rect x="212.85" y="3.95" width="1.500" height="1.500"/><rect x="216.72" y="0.00" width="1.500" height="1.500"/><rect x="216.72" y="3.95" width="1.500" height="1.500"/><rect x="220.59" y="0.00" width="1.500" height="1.500"/><rect x="220.59" y="3.95" width="1.500" height="1.500"/><rect x="224.46" y="0.00" width="1.500" height="1.500"/><rect x="224.46" y="3.95" width="1.500" height="1.500"/><rect x="228.33" y="0.00" width="1.500" height="1.500"/><rect x="228.33" y="3.95" width="1.500" height="1.500"/><rect x="232.20" y="0.00" width="1.500" height="1.500"/><rect x="232.20" y="3.95" width="1.500" height="1.500"/><rect x="236.07" y="0.00" width="1.500" height="1.500"/><rect x="236.07" y="3.95" width="1.500" height="1.500"/><rect x="239.94" y="0.00" width="1.500" height="1.500"/><rect x="239.94" y="3.95" width="1.500" height="1.500"/><rect x="243.81" y="0.00" width="1.500" height="1.500"/><rect x="243.81" y="3.95" width="1.500" height="1.500"/><rect x="247.68" y="0.00" width="1.500" height="1.500"/><rect x="247.68" y="3.95" width="1.500" height="1.500"/><rect x="251.55" y="0.00" width="1.500" height="1.500"/><rect x="251.55" y="3.95" width="1.500" height="1.500"/><rect x="255.42" y="0.00" width="1.500" height="1.500"/><rect x="255.42" y="3.95" width="1.500" height="1.500"/><rect x="259.29" y="0.00" width="1.500" height="1.500"/><rect x="259.29" y="3.95" width="1.500" height="1.500"/><rect x="263.16" y="0.00" width="1.500" height="1.500"/><rect x="263.16" y="3.95" width="1.500" height="1.500"/><rect x="267.03" y="0.00" width="1.500" height="1.500"/><rect x="267.03" y="3.95" width="1.500" height="1.500"/><rect x="270.90" y="0.00" width="1.500" height="1.500"/><rect x="270.90" y="3.95" width="1.500" height="1.500"/><rect x="274.77" y="0.00" width="1.500" height="1.500"/><rect x="274.77" y="3.95" width="1.500" height="1.500"/><rect x="278.64" y="0.00" width="1.500" height="1.500"/><rect x="278.64" y="3.95" width="1.500" height="1.500"/><rect x="282.51" y="0.00" width="1.500" height="1.500"/><rect x="282.51" y="3.95" width="1.500" height="1.500"/><rect x="286.38" y="0.00" width="1.500" height="1.500"/><rect x="286.38" y="3.95" width="1.500" height="1.500"/><rect x="290.25" y="0.00" width="1.500" height="1.500"/><rect x="290.25" y="3.95" width="1.500" height="1.500"/><rect x="294.12" y="0.00" width="1.500" height="1.500"/><rect x="294.12" y="3.95" width="1.500" height="1.500"/><rect x="297.99" y="0.00" width="1.500" height="1.500"/><rect x="297.99" y="3.95" width="1.500" height="1.500"/><rect x="301.86" y="0.00" width="1.500" height="1.500"/><rect x="301.86" y="3.95" width="1.500" height="1.500"/><rect x="305.73" y="0.00" width="1.500" height="1.500"/><rect x="305.73" y="3.95" width="1.500" height="1.500"/><rect x="309.60" y="0.00" width="1.500" height="1.500"/><rect x="309.60" y="3.95" width="1.500" height="1.500"/><rect x="313.47" y="0.00" width="1.500" height="1.500"/><rect x="313.47" y="3.95" width="1.500" height="1.500"/><rect x="317.34" y="0.00" width="1.500" height="1.500"/><rect x="317.34" y="3.95" width="1.500" height="1.500"/><rect x="321.21" y="0.00" width="1.500" height="1.500"/><rect x="321.21" y="3.95" width="1.500" height="1.500"/><rect x="325.08" y="0.00" width="1.500" height="1.500"/><rect x="325.08" y="3.95" width="1.500" height="1.500"/><rect x="328.95" y="0.00" width="1.500" height="1.500"/><rect x="328.95" y="3.95" width="1.500" height="1.500"/><rect x="332.82" y="0.00" width="1.500" height="1.500"/><rect x="332.82" y="3.95" width="1.500" height="1.500"/><rect x="336.69" y="0.00" width="1.500" height="1.500"/><rect x="336.69" y="3.95" width="1.500" height="1.500"/><rect x="340.56" y="0.00" width="1.500" height="1.500"/><rect x="340.56" y="3.95" width="1.500" height="1.500"/><rect x="344.43" y="0.00" width="1.500" height="1.500"/><rect x="344.43" y="3.95" width="1.500" height="1.500"/><rect x="348.30" y="0.00" width="1.500" height="1.500"/><rect x="348.30" y="3.95" width="1.500" height="1.500"/><rect x="352.17" y="0.00" width="1.500" height="1.500"/><rect x="352.17" y="3.95" width="1.500" height="1.500"/><rect x="356.04" y="0.00" width="1.500" height="1.500"/><rect x="356.04" y="3.95" width="1.500" height="1.500"/><rect x="359.91" y="0.00" width="1.500" height="1.500"/><rect x="359.91" y="3.95" width="1.500" height="1.500"/><rect x="363.78" y="0.00" width="1.500" height="1.500"/><rect x="363.78" y="3.95" width="1.500" height="1.500"/><rect x="367.65" y="0.00" width="1.500" height="1.500"/><rect x="367.65" y="3.95" width="1.500" height="1.500"/><rect x="371.52" y="0.00" width="1.500" height="1.500"/><rect x="371.52" y="3.95" width="1.500" height="1.500"/><rect x="375.39" y="0.00" width="1.500" height="1.500"/><rect x="375.39" y="3.95" width="1.500" height="1.500"/><rect x="379.26" y="0.00" width="1.500" height="1.500"/><rect x="379.26" y="3.95" width="1.500" height="1.500"/><rect x="383.13" y="0.00" width="1.500" height="1.500"/><rect x="383.13" y="3.95" width="1.500" height="1.500"/><rect x="387.00" y="0.00" width="1.500" height="1.500"/><rect x="387.00" y="3.95" width="1.500" height="1.500"/><rect x="390.87" y="0.00" width="1.500" height="1.500"/><rect x="390.87" y="3.95" width="1.500" height="1.500"/><rect x="394.74" y="0.00" width="1.500" height="1.500"/><rect x="394.74" y="3.95" width="1.500" height="1.500"/><rect x="398.61" y="0.00" width="1.500" height="1.500"/><rect x="398.61" y="3.95" width="1.500" height="1.500"/><rect x="402.48" y="0.00" width="1.500" height="1.500"/><rect x="402.48" y="3.95" width="1.500" height="1.500"/><rect x="406.35" y="0.00" width="1.500" height="1.500"/><rect x="406.35" y="3.95" width="1.500" height="1.500"/><rect x="410.22" y="0.00" width="1.500" height="1.500"/><rect x="410.22" y="3.95" width="1.500" height="1.500"/><rect x="414.09" y="0.00" width="1.500" height="1.500"/><rect x="414.09" y="3.95" width="1.500" height="1.500"/><rect x="417.96" y="0.00" width="1.500" height="1.500"/><rect x="417.96" y="3.95" width="1.500" height="1.500"/><rect x="421.83" y="0.00" width="1.500" height="1.500"/><rect x="421.83" y="3.95" width="1.500" height="1.500"/><rect x="425.70" y="0.00" width="1.500" height="1.500"/><rect x="425.70" y="3.95" width="1.500" height="1.500"/><rect x="429.57" y="0.00" width="1.500" height="1.500"/><rect x="429.57" y="3.95" width="1.500" height="1.500"/><rect x="433.44" y="0.00" width="1.500" height="1.500"/><rect x="433.44" y="3.95" width="1.500" height="1.500"/><rect x="437.31" y="0.00" width="1.500" height="1.500"/><rect x="437.31" y="3.95" width="1.500" height="1.500"/><rect x="441.18" y="0.00" width="1.500" height="1.500"/><rect x="441.18" y="3.95" width="1.500" height="1.500"/><rect x="445.05" y="0.00" width="1.500" height="1.500"/><rect x="445.05" y="3.95" width="1.500" height="1.500"/><rect x="448.92" y="0.00" width="1.500" height="1.500"/><rect x="448.92" y="3.95" width="1.500" height="1.500"/><rect x="452.79" y="0.00" width="1.500" height="1.500"/><rect x="452.79" y="3.95" width="1.500" height="1.500"/><rect x="456.66" y="0.00" width="1.500" height="1.500"/><rect x="456.66" y="3.95" width="1.500" height="1.500"/><rect x="460.53" y="0.00" width="1.500" height="1.500"/><rect x="460.53" y="3.95" width="1.500" height="1.500"/><rect x="464.40" y="0.00" width="1.500" height="1.500"/><rect x="464.40" y="3.95" width="1.500" height="1.500"/><rect x="468.27" y="0.00" width="1.500" height="1.500"/><rect x="468.27" y="3.95" width="1.500" height="1.500"/><rect x="472.14" y="0.00" width="1.500" height="1.500"/><rect x="472.14" y="3.95" width="1.500" height="1.500"/><rect x="476.01" y="0.00" width="1.500" height="1.500"/><rect x="476.01" y="3.95" width="1.500" height="1.500"/><rect x="479.88" y="0.00" width="1.500" height="1.500"/><rect x="479.88" y="3.95" width="1.500" height="1.500"/><rect x="483.75" y="0.00" width="1.500" height="1.500"/><rect x="483.75" y="3.95" width="1.500" height="1.500"/><rect x="487.62" y="0.00" width="1.500" height="1.500"/><rect x="487.62" y="3.95" width="1.500" height="1.500"/><rect x="491.49" y="0.00" width="1.500" height="1.500"/><rect x="491.49" y="3.95" width="1.500" height="1.500"/><rect x="495.36" y="0.00" width="1.500" height="1.500"/><rect x="495.36" y="3.95" width="1.500" height="1.500"/><rect x="499.23" y="0.00" width="1.500" height="1.500"/><rect x="499.23" y="3.95" width="1.500" height="1.500"/><rect x="503.10" y="0.00" width="1.500" height="1.500"/><rect x="503.10" y="3.95" width="1.500" height="1.500"/><rect x="506.97" y="0.00" width="1.500" height="1.500"/><rect x="506.97" y="3.95" width="1.500" height="1.500"/><rect x="510.84" y="0.00" width="1.500" height="1.500"/><rect x="510.84" y="3.95" width="1.500" height="1.500"/><rect x="514.71" y="0.00" width="1.500" height="1.500"/><rect x="514.71" y="3.95" width="1.500" height="1.500"/><rect x="518.58" y="0.00" width="1.500" height="1.500"/><rect x="518.58" y="3.95" width="1.500" height="1.500"/><rect x="522.45" y="0.00" width="1.500" height="1.500"/><rect x="522.45" y="3.95" width="1.500" height="1.500"/><rect x="526.32" y="0.00" width="1.500" height="1.500"/><rect x="526.32" y="3.95" width="1.500" height="1.500"/><rect x="530.19" y="0.00" width="1.500" height="1.500"/><rect x="530.19" y="3.95" width="1.500" height="1.500"/><rect x="534.06" y="0.00" width="1.500" height="1.500"/><rect x="534.06" y="3.95" width="1.500" height="1.500"/><rect x="537.93" y="0.00" width="1.500" height="1.500"/><rect x="537.93" y="3.95" width="1.500" height="1.500"/><rect x="541.80" y="0.00" width="1.500" height="1.500"/><rect x="541.80" y="3.95" width="1.500" height="1.500"/><rect x="545.67" y="0.00" width="1.500" height="1.500"/><rect x="545.67" y="3.95" width="1.500" height="1.500"/><rect x="549.54" y="0.00" width="1.500" height="1.500"/><rect x="549.54" y="3.95" width="1.500" height="1.500"/><rect x="553.41" y="0.00" width="1.500" height="1.500"/><rect x="553.41" y="3.95" width="1.500" height="1.500"/><rect x="557.28" y="0.00" width="1.500" height="1.500"/><rect x="557.28" y="3.95" width="1.500" height="1.500"/><rect x="561.15" y="0.00" width="1.500" height="1.500"/><rect x="561.15" y="3.95" width="1.500" height="1.500"/><rect x="565.02" y="0.00" width="1.500" height="1.500"/><rect x="565.02" y="3.95" width="1.500" height="1.500"/><rect x="568.89" y="0.00" width="1.500" height="1.500"/><rect x="568.89" y="3.95" width="1.500" height="1.500"/><rect x="572.76" y="0.00" width="1.500" height="1.500"/><rect x="572.76" y="3.95" width="1.500" height="1.500"/><rect x="576.63" y="0.00" width="1.500" height="1.500"/><rect x="576.63" y="3.95" width="1.500" height="1.500"/><rect x="580.50" y="0.00" width="1.500" height="1.500"/><rect x="580.50" y="3.95" width="1.500" height="1.500"/><rect x="584.37" y="0.00" width="1.500" height="1.500"/><rect x="584.37" y="3.95" width="1.500" height="1.500"/><rect x="588.24" y="0.00" width="1.500" height="1.500"/><rect x="588.24" y="3.95" width="1.500" height="1.500"/><rect x="592.11" y="0.00" width="1.500" height="1.500"/><rect x="592.11" y="3.95" width="1.500" height="1.500"/><rect x="595.98" y="0.00" width="1.500" height="1.500"/><rect x="595.98" y="3.95" width="1.500" height="1.500"/><rect x="599.85" y="0.00" width="1.500" height="1.500"/><rect x="599.85" y="3.95" width="1.500" height="1.500"/><rect x="603.72" y="0.00" width="1.500" height="1.500"/><rect x="603.72" y="3.95" width="1.500" height="1.500"/><rect x="607.59" y="0.00" width="1.500" height="1.500"/><rect x="607.59" y="3.95" width="1.500" height="1.500"/><rect x="611.46" y="0.00" width="1.500" height="1.500"/><rect x="611.46" y="3.95" width="1.500" height="1.500"/><rect x="615.33" y="0.00" width="1.500" height="1.500"/><rect x="615.33" y="3.95" width="1.500" height="1.500"/><rect x="619.20" y="0.00" width="1.500" height="1.500"/><rect x="619.20" y="3.95" width="1.500" height="1.500"/><rect x="623.07" y="0.00" width="1.500" height="1.500"/><rect x="623.07" y="3.95" width="1.500" height="1.500"/><rect x="626.94" y="0.00" width="1.500" height="1.500"/><rect x="626.94" y="3.95" width="1.500" height="1.500"/><rect x="630.81" y="0.00" width="1.500" height="1.500"/><rect x="630.81" y="3.95" width="1.500" height="1.500"/><rect x="634.68" y="0.00" width="1.500" height="1.500"/><rect x="634.68" y="3.95" width="1.500" height="1.500"/><rect x="638.55" y="0.00" width="1.500" height="1.500"/><rect x="638.55" y="3.95" width="1.500" height="1.500"/><rect x="642.42" y="0.00" width="1.500" height="1.500"/><rect x="642.42" y="3.95" width="1.500" height="1.500"/><rect x="646.29" y="0.00" width="1.500" height="1.500"/><rect x="646.29" y="3.95" width="1.500" height="1.500"/><rect x="650.16" y="0.00" width="1.500" height="1.500"/><rect x="650.16" y="3.95" width="1.500" height="1.500"/><rect x="654.03" y="0.00" width="1.500" height="1.500"/><rect x="654.03" y="3.95" width="1.500" height="1.500"/><rect x="657.90" y="0.00" width="1.500" height="1.500"/><rect x="657.90" y="3.95" width="1.500" height="1.500"/><rect x="661.77" y="0.00" width="1.500" height="1.500"/><rect x="661.77" y="3.95" width="1.500" height="1.500"/><rect x="665.64" y="0.00" width="1.500" height="1.500"/><rect x="665.64" y="3.95" width="1.500" height="1.500"/><rect x="669.51" y="0.00" width="1.500" height="1.500"/><rect x="669.51" y="3.95" width="1.500" height="1.500"/><rect x="673.38" y="0.00" width="1.500" height="1.500"/><rect x="673.38" y="3.95" width="1.500" height="1.500"/><rect x="677.25" y="0.00" width="1.500" height="1.500"/><rect x="677.25" y="3.95" width="1.500" height="1.500"/><rect x="681.12" y="0.00" width="1.500" height="1.500"/><rect x="681.12" y="3.95" width="1.500" height="1.500"/><rect x="684.99" y="0.00" width="1.500" height="1.500"/><rect x="684.99" y="3.95" width="1.500" height="1.500"/><rect x="688.86" y="0.00" width="1.500" height="1.500"/><rect x="688.86" y="3.95" width="1.500" height="1.500"/><rect x="692.73" y="0.00" width="1.500" height="1.500"/><rect x="692.73" y="3.95" width="1.500" height="1.500"/><rect x="696.60" y="0.00" width="1.500" height="1.500"/><rect x="696.60" y="3.95" width="1.500" height="1.500"/><rect x="700.47" y="0.00" width="1.500" height="1.500"/><rect x="700.47" y="3.95" width="1.500" height="1.500"/><rect x="704.34" y="0.00" width="1.500" height="1.500"/><rect x="704.34" y="3.95" width="1.500" height="1.500"/><rect x="708.21" y="0.00" width="1.500" height="1.500"/><rect x="708.21" y="3.95" width="1.500" height="1.500"/><rect x="712.08" y="0.00" width="1.500" height="1.500"/><rect x="712.08" y="3.95" width="1.500" height="1.500"/><rect x="715.95" y="0.00" width="1.500" height="1.500"/><rect x="715.95" y="3.95" width="1.500" height="1.500"/><rect x="719.82" y="0.00" width="1.500" height="1.500"/><rect x="719.82" y="3.95" width="1.500" height="1.500"/><rect x="723.69" y="0.00" width="1.500" height="1.500"/><rect x="723.69" y="3.95" width="1.500" height="1.500"/><rect x="727.56" y="0.00" width="1.500" height="1.500"/><rect x="727.56" y="3.95" width="1.500" height="1.500"/><rect x="731.43" y="0.00" width="1.500" height="1.500"/><rect x="731.43" y="3.95" width="1.500" height="1.500"/><rect x="735.30" y="0.00" width="1.500" height="1.500"/><rect x="735.30" y="3.95" width="1.500" height="1.500"/><rect x="739.17" y="0.00" width="1.500" height="1.500"/><rect x="739.17" y="3.95" width="1.500" height="1.500"/><rect x="743.04" y="0.00" width="1.500" height="1.500"/><rect x="743.04" y="3.95" width="1.500" height="1.500"/><rect x="746.91" y="0.00" width="1.500" height="1.500"/><rect x="746.91" y="3.95" width="1.500" height="1.500"/><rect x="750.78" y="0.00" width="1.500" height="1.500"/><rect x="750.78" y="3.95" width="1.500" height="1.500"/><rect x="754.65" y="0.00" width="1.500" height="1.500"/><rect x="754.65" y="3.95" width="1.500" height="1.500"/><rect x="758.52" y="0.00" width="1.500" height="1.500"/><rect x="758.52" y="3.95" width="1.500" height="1.500"/><rect x="762.39" y="0.00" width="1.500" height="1.500"/><rect x="762.39" y="3.95" width="1.500" height="1.500"/><rect x="766.26" y="0.00" width="1.500" height="1.500"/><rect x="766.26" y="3.95" width="1.500" height="1.500"/><rect x="770.13" y="0.00" width="1.500" height="1.500"/><rect x="770.13" y="3.95" width="1.500" height="1.500"/><rect x="774.00" y="0.00" width="1.500" height="1.500"/><rect x="774.00" y="3.95" width="1.500" height="1.500"/><rect x="777.87" y="0.00" width="1.500" height="1.500"/><rect x="777.87" y="3.95" width="1.500" height="1.500"/><rect x="781.74" y="0.00" width="1.500" height="1.500"/><rect x="781.74" y="3.95" width="1.500" height="1.500"/><rect x="785.61" y="0.00" width="1.500" height="1.500"/><rect x="785.61" y="3.95" width="1.500" height="1.500"/><rect x="789.48" y="0.00" width="1.500" height="1.500"/><rect x="789.48" y="3.95" width="1.500" height="1.500"/><rect x="793.35" y="0.00" width="1.500" height="1.500"/><rect x="793.35" y="3.95" width="1.500" height="1.500"/><rect x="797.22" y="0.00" width="1.500" height="1.500"/><rect x="797.22" y="3.95" width="1.500" height="1.500"/><rect x="801.09" y="0.00" width="1.500" height="1.500"/><rect x="801.09" y="3.95" width="1.500" height="1.500"/><rect x="804.96" y="0.00" width="1.500" height="1.500"/><rect x="804.96" y="3.95" width="1.500" height="1.500"/><rect x="808.83" y="0.00" width="1.500" height="1.500"/><rect x="808.83" y="3.95" width="1.500" height="1.500"/><rect x="812.70" y="0.00" width="1.500" height="1.500"/><rect x="812.70" y="3.95" width="1.500" height="1.500"/><rect x="816.57" y="0.00" width="1.500" height="1.500"/><rect x="816.57" y="3.95" width="1.500" height="1.500"/><rect x="820.44" y="0.00" width="1.500" height="1.500"/><rect x="820.44" y="3.95" width="1.500" height="1.500"/><rect x="824.31" y="0.00" width="1.500" height="1.500"/><rect x="824.31" y="3.95" width="1.500" height="1.500"/><rect x="828.18" y="0.00" width="1.500" height="1.500"/><rect x="828.18" y="3.95" width="1.500" height="1.500"/><rect x="832.05" y="0.00" width="1.500" height="1.500"/><rect x="832.05" y="3.95" width="1.500" height="1.500"/><rect x="835.92" y="0.00" width="1.500" height="1.500"/><rect x="835.92" y="3.95" width="1.500" height="1.500"/><rect x="839.79" y="0.00" width="1.500" height="1.500"/><rect x="839.79" y="3.95" width="1.500" height="1.500"/><rect x="843.66" y="0.00" width="1.500" height="1.500"/><rect x="843.66" y="3.95" width="1.500" height="1.500"/><rect x="847.53" y="0.00" width="1.500" height="1.500"/><rect x="847.53" y="3.95" width="1.500" height="1.500"/><rect x="851.40" y="0.00" width="1.500" height="1.500"/><rect x="851.40" y="3.95" width="1.500" height="1.500"/><rect x="855.27" y="0.00" width="1.500" height="1.500"/><rect x="855.27" y="3.95" width="1.500" height="1.500"/><rect x="859.14" y="0.00" width="1.500" height="1.500"/><rect x="859.14" y="3.95" width="1.500" height="1.500"/><rect x="863.01" y="0.00" width="1.500" height="1.500"/><rect x="863.01" y="3.95" width="1.500" height="1.500"/><rect x="866.88" y="0.00" width="1.500" height="1.500"/><rect x="866.88" y="3.95" width="1.500" height="1.500"/><rect x="870.75" y="0.00" width="1.500" height="1.500"/><rect x="870.75" y="3.95" width="1.500" height="1.500"/><rect x="874.62" y="0.00" width="1.500" height="1.500"/><rect x="874.62" y="3.95" width="1.500" height="1.500"/><rect x="878.49" y="0.00" width="1.500" height="1.500"/><rect x="878.49" y="3.95" width="1.500" height="1.500"/><rect x="882.36" y="0.00" width="1.500" height="1.500"/><rect x="882.36" y="3.95" width="1.500" height="1.500"/><rect x="886.23" y="0.00" width="1.500" height="1.500"/><rect x="886.23" y="3.95" width="1.500" height="1.500"/><rect x="890.10" y="0.00" width="1.500" height="1.500"/><rect x="890.10" y="3.95" width="1.500" height="1.500"/><rect x="893.97" y="0.00" width="1.500" height="1.500"/><rect x="893.97" y="3.95" width="1.500" height="1.500"/><rect x="897.84" y="0.00" width="1.500" height="1.500"/><rect x="897.84" y="3.95" width="1.500" height="1.500"/><rect x="901.71" y="0.00" width="1.500" height="1.500"/><rect x="901.71" y="3.95" width="1.500" height="1.500"/><rect x="905.58" y="0.00" width="1.500" height="1.500"/><rect x="905.58" y="3.95" width="1.500" height="1.500"/><rect x="909.45" y="0.00" width="1.500" height="1.500"/><rect x="909.45" y="3.95" width="1.500" height="1.500"/><rect x="913.32" y="0.00" width="1.500" height="1.500"/><rect x="913.32" y="3.95" width="1.500" height="1.500"/><rect x="917.19" y="0.00" width="1.500" height="1.500"/><rect x="917.19" y="3.95" width="1.500" height="1.500"/><rect x="921.06" y="0.00" width="1.500" height="1.500"/><rect x="921.06" y="3.95" width="1.500" height="1.500"/><rect x="924.93" y="0.00" width="1.500" height="1.500"/><rect x="924.93" y="3.95" width="1.500" height="1.500"/><rect x="928.80" y="0.00" width="1.500" height="1.500"/><rect x="928.80" y="3.95" width="1.500" height="1.500"/><rect x="932.67" y="0.00" width="1.500" height="1.500"/><rect x="932.67" y="3.95" width="1.500" height="1.500"/><rect x="936.54" y="0.00" width="1.500" height="1.500"/><rect x="936.54" y="3.95" width="1.500" height="1.500"/><rect x="940.41" y="0.00" width="1.500" height="1.500"/><rect x="940.41" y="3.95" width="1.500" height="1.500"/><rect x="944.28" y="0.00" width="1.500" height="1.500"/><rect x="944.28" y="3.95" width="1.500" height="1.500"/><rect x="948.15" y="0.00" width="1.500" height="1.500"/><rect x="948.15" y="3.95" width="1.500" height="1.500"/><rect x="952.02" y="0.00" width="1.500" height="1.500"/><rect x="952.02" y="3.95" width="1.500" height="1.500"/><rect x="955.89" y="0.00" width="1.500" height="1.500"/><rect x="955.89" y="3.95" width="1.500" height="1.500"/></svg>
<svg class="a" style="left:46.6px;top:852.7px" width="6" height="26" fill="#505050"><rect x="0.00" y="0.00" width="1.500" height="1.500"/><rect x="0.00" y="3.87" width="1.500" height="1.500"/><rect x="0.00" y="7.74" width="1.500" height="1.500"/><rect x="0.00" y="11.61" width="1.500" height="1.500"/><rect x="0.00" y="15.48" width="1.500" height="1.500"/><rect x="0.00" y="19.35" width="1.500" height="1.500"/><rect x="0.00" y="23.22" width="1.500" height="1.500"/><rect x="3.95" y="0.00" width="1.500" height="1.500"/><rect x="3.95" y="3.87" width="1.500" height="1.500"/><rect x="3.95" y="7.74" width="1.500" height="1.500"/><rect x="3.95" y="11.61" width="1.500" height="1.500"/><rect x="3.95" y="15.48" width="1.500" height="1.500"/><rect x="3.95" y="19.35" width="1.500" height="1.500"/><rect x="3.95" y="23.22" width="1.500" height="1.500"/></svg>
<svg class="a" style="left:46.6px;top:888.2px" width="6" height="49" fill="#505050"><rect x="0.00" y="0.00" width="1.500" height="1.500"/><rect x="0.00" y="3.87" width="1.500" height="1.500"/><rect x="0.00" y="7.74" width="1.500" height="1.500"/><rect x="0.00" y="11.61" width="1.500" height="1.500"/><rect x="0.00" y="15.48" width="1.500" height="1.500"/><rect x="0.00" y="19.35" width="1.500" height="1.500"/><rect x="0.00" y="23.22" width="1.500" height="1.500"/><rect x="0.00" y="27.09" width="1.500" height="1.500"/><rect x="0.00" y="30.96" width="1.500" height="1.500"/><rect x="0.00" y="34.83" width="1.500" height="1.500"/><rect x="0.00" y="38.70" width="1.500" height="1.500"/><rect x="0.00" y="42.57" width="1.500" height="1.500"/><rect x="0.00" y="46.44" width="1.500" height="1.500"/><rect x="3.95" y="0.00" width="1.500" height="1.500"/><rect x="3.95" y="3.87" width="1.500" height="1.500"/><rect x="3.95" y="7.74" width="1.500" height="1.500"/><rect x="3.95" y="11.61" width="1.500" height="1.500"/><rect x="3.95" y="15.48" width="1.500" height="1.500"/><rect x="3.95" y="19.35" width="1.500" height="1.500"/><rect x="3.95" y="23.22" width="1.500" height="1.500"/><rect x="3.95" y="27.09" width="1.500" height="1.500"/><rect x="3.95" y="30.96" width="1.500" height="1.500"/><rect x="3.95" y="34.83" width="1.500" height="1.500"/><rect x="3.95" y="38.70" width="1.500" height="1.500"/><rect x="3.95" y="42.57" width="1.500" height="1.500"/><rect x="3.95" y="46.44" width="1.500" height="1.500"/></svg>
<div class="a" style="left:56.2px;top:848.5px;width:33.2px;height:33.1px;background:#5558a6;border-radius:3px;"></div>
<div class="a" style="left:137.3px;top:848.5px;width:243.8px;height:33.1px;background:#3b3b3b;border-radius:3px;"></div>
<div class="a" style="left:170.1px;top:849.5px;width:1.0px;height:31.1px;background:#303030;"></div>
<div class="a" style="left:205.0px;top:849.5px;width:1.0px;height:31.1px;background:#303030;"></div>
<div class="a" style="left:239.9px;top:849.5px;width:1.0px;height:31.1px;background:#303030;"></div>
<div class="a" style="left:275.0px;top:849.5px;width:1.0px;height:31.1px;background:#303030;"></div>
<div class="a" style="left:310.2px;top:849.5px;width:1.0px;height:31.1px;background:#303030;"></div>
<div class="a" style="left:345.2px;top:849.5px;width:1.0px;height:31.1px;background:#303030;"></div>
<div class="a" style="left:395.1px;top:848.5px;width:103.6px;height:33.1px;background:#3b3b3b;border-radius:3px;"></div>
<div class="a" style="left:395.1px;top:848.5px;width:68.2px;height:33.1px;background:#5558a6;border-radius:3px 0 0 3px;"></div>
<div class="a" style="left:427.9px;top:848.5px;width:1.0px;height:33.1px;background:#484b92;"></div>
<div class="a" style="left:512.4px;top:854px;width:92.9px;height:22.4px;background:#1c1c1c;border-radius:4px;"></div>
<span class="t" id="t111" style="left:558.5px;top:855.00px;font-size:13.5px;line-height:20px;color:#e0e0e0;transform:translateX(-50%) scaleX(1.0000);transform-origin:50% 50%;">0 F</span>
<div class="a" style="left:619.1px;top:848.5px;width:104.8px;height:33.1px;background:#3b3b3b;border-radius:3px;"></div>
<div class="a" style="left:653.1px;top:849.5px;width:1.0px;height:31.1px;background:#303030;"></div>
<div class="a" style="left:688.1px;top:849.5px;width:1.0px;height:31.1px;background:#303030;"></div>
<div class="a" style="left:749.2px;top:848.5px;width:173.9px;height:33.1px;background:#3b3b3b;border-radius:3px;"></div>
<div class="a" style="left:783.3px;top:849.5px;width:1.0px;height:31.1px;background:#303030;"></div>
<div class="a" style="left:818.2px;top:849.5px;width:1.0px;height:31.1px;background:#303030;"></div>
<div class="a" style="left:853.1px;top:849.5px;width:1.0px;height:31.1px;background:#303030;"></div>
<div class="a" style="left:889px;top:848.5px;width:34.1px;height:33.1px;background:#5558a6;border-radius:0 3px 3px 0;"></div>
<div class="a" style="left:971.3px;top:848.5px;width:32.9px;height:33.1px;background:#5558a6;border-radius:3px;"></div>
<svg class="a" style="left:50px;top:846px" width="962" height="68" viewBox="50 846 962 68" fill="none" stroke-linecap="round" stroke-linejoin="round"><path d="M72.500 856.600L80.700 864.800L72.500 873L64.300 864.800Z" stroke="#d0ccc2" stroke-width="2.700" stroke-linejoin="miter"/><path d="M146.500 858.100V872.300" stroke="#c4c4c4" stroke-width="1.900" stroke-linecap="butt"/><path d="M161.100 859.300V870.600L151.800 864.900Z" stroke="#c4c4c4" stroke-width="1.700" stroke-linejoin="miter"/><path d="M183.100 859.500L188.400 864.800L183.100 870.100L177.800 864.800Z" fill="#c4c4c4"/><path d="M199.700 859.300V870.600L190.500 864.900Z" stroke="#c4c4c4" stroke-width="1.700" stroke-linejoin="miter"/><path d="M226 859.300V870.600L216.700 864.900Z" stroke="#c4c4c4" stroke-width="1.700" stroke-linejoin="miter"/><path d="M230.500 858.100V872.300" stroke="#c4c4c4" stroke-width="1.900" stroke-linecap="butt"/><path d="M252.100 856V873.900L266.200 864.900Z" stroke="#c4c4c4" stroke-width="1.800" stroke-linejoin="miter"/><path d="M287.100 858.100V872.300" stroke="#c4c4c4" stroke-width="1.900" stroke-linecap="butt"/><path d="M291.600 859.300V870.600L301.300 864.900Z" stroke="#c4c4c4" stroke-width="1.700" stroke-linejoin="miter"/><path d="M318.200 859.300V870.600L327.400 864.900Z" stroke="#c4c4c4" stroke-width="1.700" stroke-linejoin="miter"/><path d="M334.900 859.500L340.200 864.800L334.900 870.100L329.600 864.800Z" fill="#c4c4c4"/><path d="M356.800 859.300V870.600L366.500 864.900Z" stroke="#c4c4c4" stroke-width="1.700" stroke-linejoin="miter"/><path d="M371.800 858.100V872.300" stroke="#c4c4c4" stroke-width="1.900" stroke-linecap="butt"/><path d="M404.700 865V859.800H420.300M416.400 855.400L421.200 859.800L416.400 864.200M418.900 864.800V870.600H403.200M407.300 866.300L402.400 870.600L407.300 875.100" stroke="#d6d6d6" stroke-width="1.900" stroke-linecap="butt" stroke-linejoin="miter"/><path d="M428 875.6V881.4H422.2Z" fill="#aeaeae" stroke="none"/><path d="M462.9 875.6V881.4H457.09999999999997Z" fill="#aeaeae" stroke="none"/><text x="446.300" y="864.800" font-family="Liberation Sans,sans-serif" font-size="11.600" text-anchor="middle" fill="#d6d6d6">A</text><rect x="435.2" y="868.600" width="2.10" height="5.700" fill="#d6d6d6"/><rect x="440.5" y="868.600" width="2.40" height="5.700" fill="#d6d6d6"/><rect x="446.3" y="868.600" width="2.50" height="5.700" fill="#d6d6d6"/><rect x="451.3" y="868.600" width="7.50" height="5.700" fill="#d6d6d6"/><path d="M471.200 861.500H474.900L479.900 856.700V873.400L474.900 868.600H471.200Z" stroke="#c4c4c4" stroke-width="1.700" stroke-linejoin="miter"/><path d="M482.300 860.300Q487 864.900 482.300 869.500Z" fill="#c4c4c4"/><path d="M484 855Q498.500 864.900 484 875" stroke="#c4c4c4" stroke-width="2"/><circle cx="636.600" cy="864.800" r="10.800" stroke="#f07a68" stroke-width="1.700"/><path d="M636.600 859.500L641.900 864.800L636.600 870.100L631.300 864.800Z" fill="#cacaca"/><path d="M653.2 875.6V881.4H647.4000000000001Z" fill="#8a8a8a" stroke="none"/><circle cx="671.500" cy="864.800" r="10.800" stroke="#f07a68" stroke-width="1.700"/><text x="671.500" y="870.500" font-family="Liberation Sans,sans-serif" font-size="15.800" text-anchor="middle" fill="#cacaca">A</text><circle cx="706.400" cy="864.800" r="10.800" stroke="#c4c4c4" stroke-width="1.700"/><path d="M704.81 859.71L704.88 857.56L707.92 857.56L707.99 859.71L708.88 860.08L710.45 858.60L712.60 860.75L711.12 862.32L711.49 863.21L713.64 863.28L713.64 866.32L711.49 866.39L711.12 867.28L712.60 868.85L710.45 871.00L708.88 869.52L707.99 869.89L707.92 872.04L704.88 872.04L704.81 869.89L703.92 869.52L702.35 871.00L700.20 868.85L701.68 867.28L701.31 866.39L699.16 866.32L699.16 863.28L701.31 863.21L701.68 862.32L700.20 860.75L702.35 858.60L703.92 860.08Z" fill="#c4c4c4" stroke="#c4c4c4" stroke-width=".6" stroke-linejoin="round"/><circle cx="706.4" cy="864.8" r="2.6" fill="#3b3b3b"/><path d="M766.3 858.5L772.5999999999999 864.8L766.3 871.0999999999999L760.0 864.8Z" fill="#c4c4c4"/><path d="M762.200 858.200L766.300 854.900L770.400 858.200M762.200 871.400L766.300 874.700L770.400 871.400M759 860.700L755.700 864.800L759 868.900M773.600 860.700L776.900 864.800L773.600 868.900" stroke="#c4c4c4" stroke-width="1.600" stroke-linecap="butt" stroke-linejoin="miter"/><path d="M801.8 858.5L808.0999999999999 864.8L801.8 871.0999999999999L795.5 864.8Z" fill="#c4c4c4"/><path d="M800.800 854.300A10.600 10.600 0 0 0 796.800 874.300M790.800 875.400H797.200V869" stroke="#c4c4c4" stroke-width="1.700" stroke-linecap="butt" stroke-linejoin="miter"/><path d="M802.800 875.300A10.600 10.600 0 0 0 806.800 855.300M812.800 854.200H806.400V860.600" stroke="#c4c4c4" stroke-width="1.700" stroke-linecap="butt" stroke-linejoin="miter"/><path d="M826.600 860.800V856H846.600V874.300H838" stroke="#c4c4c4" stroke-width="1.900" stroke-linecap="butt" stroke-linejoin="miter"/><path d="M832.4 863.8L838.4 869.8L832.4 875.8L826.4 869.8Z" fill="#c4c4c4"/><rect x="861.200" y="857" width="21.100" height="7" rx="3.500" fill="#c4c4c4"/><rect x="861.200" y="866.500" width="21.100" height="7.100" rx="3.500" fill="#c4c4c4"/><circle cx="864.900" cy="860.500" r="1.600" fill="#3b3b3b"/><circle cx="878.500" cy="870" r="1.600" fill="#3b3b3b"/><circle cx="907.300" cy="859.900" r="3.600" fill="#d0d0d0"/><circle cx="900.600" cy="870.600" r="3.800" fill="#d0d0d0"/><circle cx="911.400" cy="871.400" r="3.300" fill="#d0d0d0"/><path d="M896.500 855.200L917 875.400" stroke="#5558a6" stroke-width="4"/><path d="M897.300 856L916.400 874.800" stroke="#d0d0d0" stroke-width="1.600"/><path d="M979.300 858.500V873.900H995M979.600 873.600L993.600 859.200M989.400 858.100H994.600V863.300" stroke="#dadada" stroke-width="1.800" stroke-linecap="butt" stroke-linejoin="miter"/><path d="M976.200 859.200L979.300 854.700L982.500 859.200ZM994.500 870.900L998.900 873.900L994.500 877Z" fill="#dadada"/><path d="M83.50 908V912" stroke="#c0c0c0" stroke-width="1"/><path d="M93.50 908V912" stroke="#c0c0c0" stroke-width="1"/><path d="M104.50 908V912" stroke="#c0c0c0" stroke-width="1"/><path d="M114.50 908V912" stroke="#c0c0c0" stroke-width="1"/><path d="M124.50 908V912" stroke="#c0c0c0" stroke-width="1"/><path d="M134.50 908V912" stroke="#c0c0c0" stroke-width="1"/><path d="M144.50 908V912" stroke="#c0c0c0" stroke-width="1"/><path d="M155.50 908V912" stroke="#c0c0c0" stroke-width="1"/><path d="M165.50 908V912" stroke="#c0c0c0" stroke-width="1"/><path d="M175.50 908V912" stroke="#c0c0c0" stroke-width="1"/><path d="M185.50 908V912" stroke="#c0c0c0" stroke-width="1"/><path d="M195.50 908V912" stroke="#c0c0c0" stroke-width="1"/><path d="M206.50 908V912" stroke="#c0c0c0" stroke-width="1"/><path d="M216.50 908V912" stroke="#c0c0c0" stroke-width="1"/><path d="M226.50 908V912" stroke="#c0c0c0" stroke-width="1"/><path d="M236.50 908V912" stroke="#c0c0c0" stroke-width="1"/><path d="M247.50 908V912" stroke="#c0c0c0" stroke-width="1"/><path d="M257.50 908V912" stroke="#c0c0c0" stroke-width="1"/><path d="M267.50 908V912" stroke="#c0c0c0" stroke-width="1"/><path d="M277.50 908V912" stroke="#c0c0c0" stroke-width="1"/><path d="M287.50 908V912" stroke="#c0c0c0" stroke-width="1"/><path d="M298.50 908V912" stroke="#c0c0c0" stroke-width="1"/><path d="M308.50 908V912" stroke="#c0c0c0" stroke-width="1"/><path d="M318.50 908V912" stroke="#c0c0c0" stroke-width="1"/><path d="M328.50 908V912" stroke="#c0c0c0" stroke-width="1"/><path d="M338.50 908V912" stroke="#c0c0c0" stroke-width="1"/><path d="M349.50 908V912" stroke="#c0c0c0" stroke-width="1"/><path d="M359.50 908V912" stroke="#c0c0c0" stroke-width="1"/><path d="M369.50 908V912" stroke="#c0c0c0" stroke-width="1"/><path d="M379.50 885.800V912" stroke="#c4c4c4" stroke-width="1"/><path d="M389.50 908V912" stroke="#c0c0c0" stroke-width="1"/><path d="M400.50 908V912" stroke="#c0c0c0" stroke-width="1"/><path d="M410.50 908V912" stroke="#c0c0c0" stroke-width="1"/><path d="M420.50 908V912" stroke="#c0c0c0" stroke-width="1"/><path d="M430.50 908V912" stroke="#c0c0c0" stroke-width="1"/><path d="M441.50 908V912" stroke="#c0c0c0" stroke-width="1"/><path d="M451.50 908V912" stroke="#c0c0c0" stroke-width="1"/><path d="M461.50 908V912" stroke="#c0c0c0" stroke-width="1"/><path d="M471.50 908V912" stroke="#c0c0c0" stroke-width="1"/><path d="M481.50 908V912" stroke="#c0c0c0" stroke-width="1"/><path d="M492.50 908V912" stroke="#c0c0c0" stroke-width="1"/><path d="M502.50 908V912" stroke="#c0c0c0" stroke-width="1"/><path d="M512.50 908V912" stroke="#c0c0c0" stroke-width="1"/><path d="M522.50 908V912" stroke="#c0c0c0" stroke-width="1"/><path d="M532.50 908V912" stroke="#c0c0c0" stroke-width="1"/><path d="M543.50 908V912" stroke="#c0c0c0" stroke-width="1"/><path d="M553.50 908V912" stroke="#c0c0c0" stroke-width="1"/><path d="M563.50 908V912" stroke="#c0c0c0" stroke-width="1"/><path d="M573.50 908V912" stroke="#c0c0c0" stroke-width="1"/><path d="M583.50 908V912" stroke="#c0c0c0" stroke-width="1"/><path d="M594.50 908V912" stroke="#c0c0c0" stroke-width="1"/><path d="M604.50 908V912" stroke="#c0c0c0" stroke-width="1"/><path d="M614.50 908V912" stroke="#c0c0c0" stroke-width="1"/><path d="M624.50 908V912" stroke="#c0c0c0" stroke-width="1"/><path d="M635.50 908V912" stroke="#c0c0c0" stroke-width="1"/><path d="M645.50 908V912" stroke="#c0c0c0" stroke-width="1"/><path d="M655.50 908V912" stroke="#c0c0c0" stroke-width="1"/><path d="M665.50 908V912" stroke="#c0c0c0" stroke-width="1"/><path d="M675.50 908V912" stroke="#c0c0c0" stroke-width="1"/><path d="M686.50 885.800V912" stroke="#c4c4c4" stroke-width="1"/><path d="M696.50 908V912" stroke="#c0c0c0" stroke-width="1"/><path d="M706.50 908V912" stroke="#c0c0c0" stroke-width="1"/><path d="M716.50 908V912" stroke="#c0c0c0" stroke-width="1"/><path d="M726.50 908V912" stroke="#c0c0c0" stroke-width="1"/><path d="M737.50 908V912" stroke="#c0c0c0" stroke-width="1"/><path d="M747.50 908V912" stroke="#c0c0c0" stroke-width="1"/><path d="M757.50 908V912" stroke="#c0c0c0" stroke-width="1"/><path d="M767.50 908V912" stroke="#c0c0c0" stroke-width="1"/><path d="M777.50 908V912" stroke="#c0c0c0" stroke-width="1"/><path d="M788.50 908V912" stroke="#c0c0c0" stroke-width="1"/><path d="M798.50 908V912" stroke="#c0c0c0" stroke-width="1"/><path d="M808.50 908V912" stroke="#c0c0c0" stroke-width="1"/><path d="M818.50 908V912" stroke="#c0c0c0" stroke-width="1"/><path d="M829.50 908V912" stroke="#c0c0c0" stroke-width="1"/><path d="M839.50 908V912" stroke="#c0c0c0" stroke-width="1"/><path d="M849.50 908V912" stroke="#c0c0c0" stroke-width="1"/><path d="M859.50 908V912" stroke="#c0c0c0" stroke-width="1"/><path d="M869.50 908V912" stroke="#c0c0c0" stroke-width="1"/><path d="M880.50 908V912" stroke="#c0c0c0" stroke-width="1"/><path d="M890.50 908V912" stroke="#c0c0c0" stroke-width="1"/><path d="M900.50 908V912" stroke="#c0c0c0" stroke-width="1"/><path d="M910.50 908V912" stroke="#c0c0c0" stroke-width="1"/><path d="M920.50 908V912" stroke="#c0c0c0" stroke-width="1"/><path d="M931.50 908V912" stroke="#c0c0c0" stroke-width="1"/><path d="M941.50 908V912" stroke="#c0c0c0" stroke-width="1"/><path d="M951.50 908V912" stroke="#c0c0c0" stroke-width="1"/><path d="M961.50 908V912" stroke="#c0c0c0" stroke-width="1"/><path d="M971.50 908V912" stroke="#c0c0c0" stroke-width="1"/><path d="M982.50 908V912" stroke="#c0c0c0" stroke-width="1"/><path d="M992.50 885.800V912" stroke="#c4c4c4" stroke-width="1"/><path d="M63.5 908V912M1002.5 908V912" stroke="#c0c0c0" stroke-width="1"/><path d="M57 905.400H1008" stroke="#363636" stroke-width="1"/><rect x="67" y="885" width="12" height="19.700" fill="#7377c8"/><path d="M73.500 904.700V912" stroke="#d0d0d0" stroke-width="1"/></svg>
<span class="t" id="t112" style="left:84.1px;top:883.70px;font-size:14.3px;line-height:20px;color:#b4b4b4;transform:translateX(-50%) scaleX(0.8676);transform-origin:50% 50%;">0</span>
<span class="t" id="t113" style="left:123.21px;top:883.70px;font-size:14.3px;line-height:20px;color:#b4b4b4;transform:translateX(-50%) scaleX(0.8676);transform-origin:50% 50%;">5</span>
<span class="t" id="t114" style="left:174.26px;top:883.70px;font-size:14.3px;line-height:20px;color:#b4b4b4;transform:translateX(-50%) scaleX(0.8550);transform-origin:50% 50%;">10</span>
<span class="t" id="t115" style="left:225.31px;top:883.70px;font-size:14.3px;line-height:20px;color:#b4b4b4;transform:translateX(-50%) scaleX(0.8550);transform-origin:50% 50%;">15</span>
<span class="t" id="t116" style="left:276.36px;top:883.70px;font-size:14.3px;line-height:20px;color:#b4b4b4;transform:translateX(-50%) scaleX(0.8550);transform-origin:50% 50%;">20</span>
<span class="t" id="t117" style="left:327.41px;top:883.70px;font-size:14.3px;line-height:20px;color:#b4b4b4;transform:translateX(-50%) scaleX(0.8550);transform-origin:50% 50%;">25</span>
<span class="t" id="t118" style="left:378.46px;top:883.70px;font-size:14.3px;line-height:20px;color:#b4b4b4;transform:translateX(-50%) scaleX(0.8550);transform-origin:50% 50%;">30</span>
<span class="t" id="t119" style="left:429.51px;top:883.70px;font-size:14.3px;line-height:20px;color:#b4b4b4;transform:translateX(-50%) scaleX(0.8550);transform-origin:50% 50%;">35</span>
<span class="t" id="t120" style="left:480.56px;top:883.70px;font-size:14.3px;line-height:20px;color:#b4b4b4;transform:translateX(-50%) scaleX(0.8550);transform-origin:50% 50%;">40</span>
<span class="t" id="t121" style="left:531.6100000000001px;top:883.70px;font-size:14.3px;line-height:20px;color:#b4b4b4;transform:translateX(-50%) scaleX(0.8550);transform-origin:50% 50%;">45</span>
<span class="t" id="t122" style="left:582.6600000000001px;top:883.70px;font-size:14.3px;line-height:20px;color:#b4b4b4;transform:translateX(-50%) scaleX(0.8550);transform-origin:50% 50%;">50</span>
<span class="t" id="t123" style="left:633.7100000000002px;top:883.70px;font-size:14.3px;line-height:20px;color:#b4b4b4;transform:translateX(-50%) scaleX(0.8550);transform-origin:50% 50%;">55</span>
<span class="t" id="t124" style="left:684.7600000000001px;top:883.70px;font-size:14.3px;line-height:20px;color:#b4b4b4;transform:translateX(-50%) scaleX(0.8550);transform-origin:50% 50%;">60</span>
<span class="t" id="t125" style="left:735.8100000000002px;top:883.70px;font-size:14.3px;line-height:20px;color:#b4b4b4;transform:translateX(-50%) scaleX(0.8550);transform-origin:50% 50%;">65</span>
<span class="t" id="t126" style="left:786.8600000000001px;top:883.70px;font-size:14.3px;line-height:20px;color:#b4b4b4;transform:translateX(-50%) scaleX(0.8550);transform-origin:50% 50%;">70</span>
<span class="t" id="t127" style="left:837.9100000000002px;top:883.70px;font-size:14.3px;line-height:20px;color:#b4b4b4;transform:translateX(-50%) scaleX(0.8550);transform-origin:50% 50%;">75</span>
<span class="t" id="t128" style="left:888.9600000000002px;top:883.70px;font-size:14.3px;line-height:20px;color:#b4b4b4;transform:translateX(-50%) scaleX(0.8550);transform-origin:50% 50%;">80</span>
<span class="t" id="t129" style="left:940.0100000000001px;top:883.70px;font-size:14.3px;line-height:20px;color:#b4b4b4;transform:translateX(-50%) scaleX(0.8550);transform-origin:50% 50%;">85</span>
<span class="t" id="t130" style="left:991.0600000000002px;top:883.70px;font-size:14.3px;line-height:20px;color:#b4b4b4;transform:translateX(-50%) scaleX(0.8550);transform-origin:50% 50%;">90</span>
<div class="a" style="left:57.3px;top:916.3px;width:91.7px;height:21.5px;background:#1c1c1c;border-radius:4px;"></div>
<span class="t" id="t131" style="left:102px;top:918.00px;font-size:13.5px;line-height:20px;color:#e0e0e0;transform:translateX(-50%) scaleX(1.0000);transform-origin:50% 50%;">0 F</span>
<div class="a" style="left:159.5px;top:916.3px;width:748.5px;height:21.3px;background:#3a3a3a;border-radius:4px;"></div>
<div class="a" style="left:163px;top:921px;width:1px;height:12px;background:#555;"></div>
<div class="a" style="left:165.5px;top:921px;width:1.0px;height:12px;background:#555;"></div>
<div class="a" style="left:168px;top:921px;width:1px;height:12px;background:#555;"></div>
<div class="a" style="left:898px;top:921px;width:1px;height:12px;background:#555;"></div>
<div class="a" style="left:900.5px;top:921px;width:1.0px;height:12px;background:#555;"></div>
<div class="a" style="left:903px;top:921px;width:1px;height:12px;background:#555;"></div>
<span class="t" id="t132" style="left:178px;top:918.00px;font-size:13.5px;line-height:20px;color:#e0e0e0;transform:scaleX(0.9223);transform-origin:0 50%;">0 F</span>
<span class="t" id="t133" style="left:860.6px;top:918.00px;font-size:13.5px;line-height:20px;color:#e0e0e0;transform:scaleX(0.9032);transform-origin:0 50%;">90 F</span>
<div class="a" style="left:916.7px;top:916.3px;width:92.8px;height:21.5px;background:#1c1c1c;border-radius:4px;"></div>
<span class="t" id="t134" style="left:961.6px;top:918.00px;font-size:13.5px;line-height:20px;color:#e0e0e0;transform:translateX(-50%) scaleX(1.0000);transform-origin:50% 50%;">90 F</span>
<div class="a" style="left:0px;top:940.6px;width:1443px;height:5.4px;background:#222222;"></div>
</body></html>
